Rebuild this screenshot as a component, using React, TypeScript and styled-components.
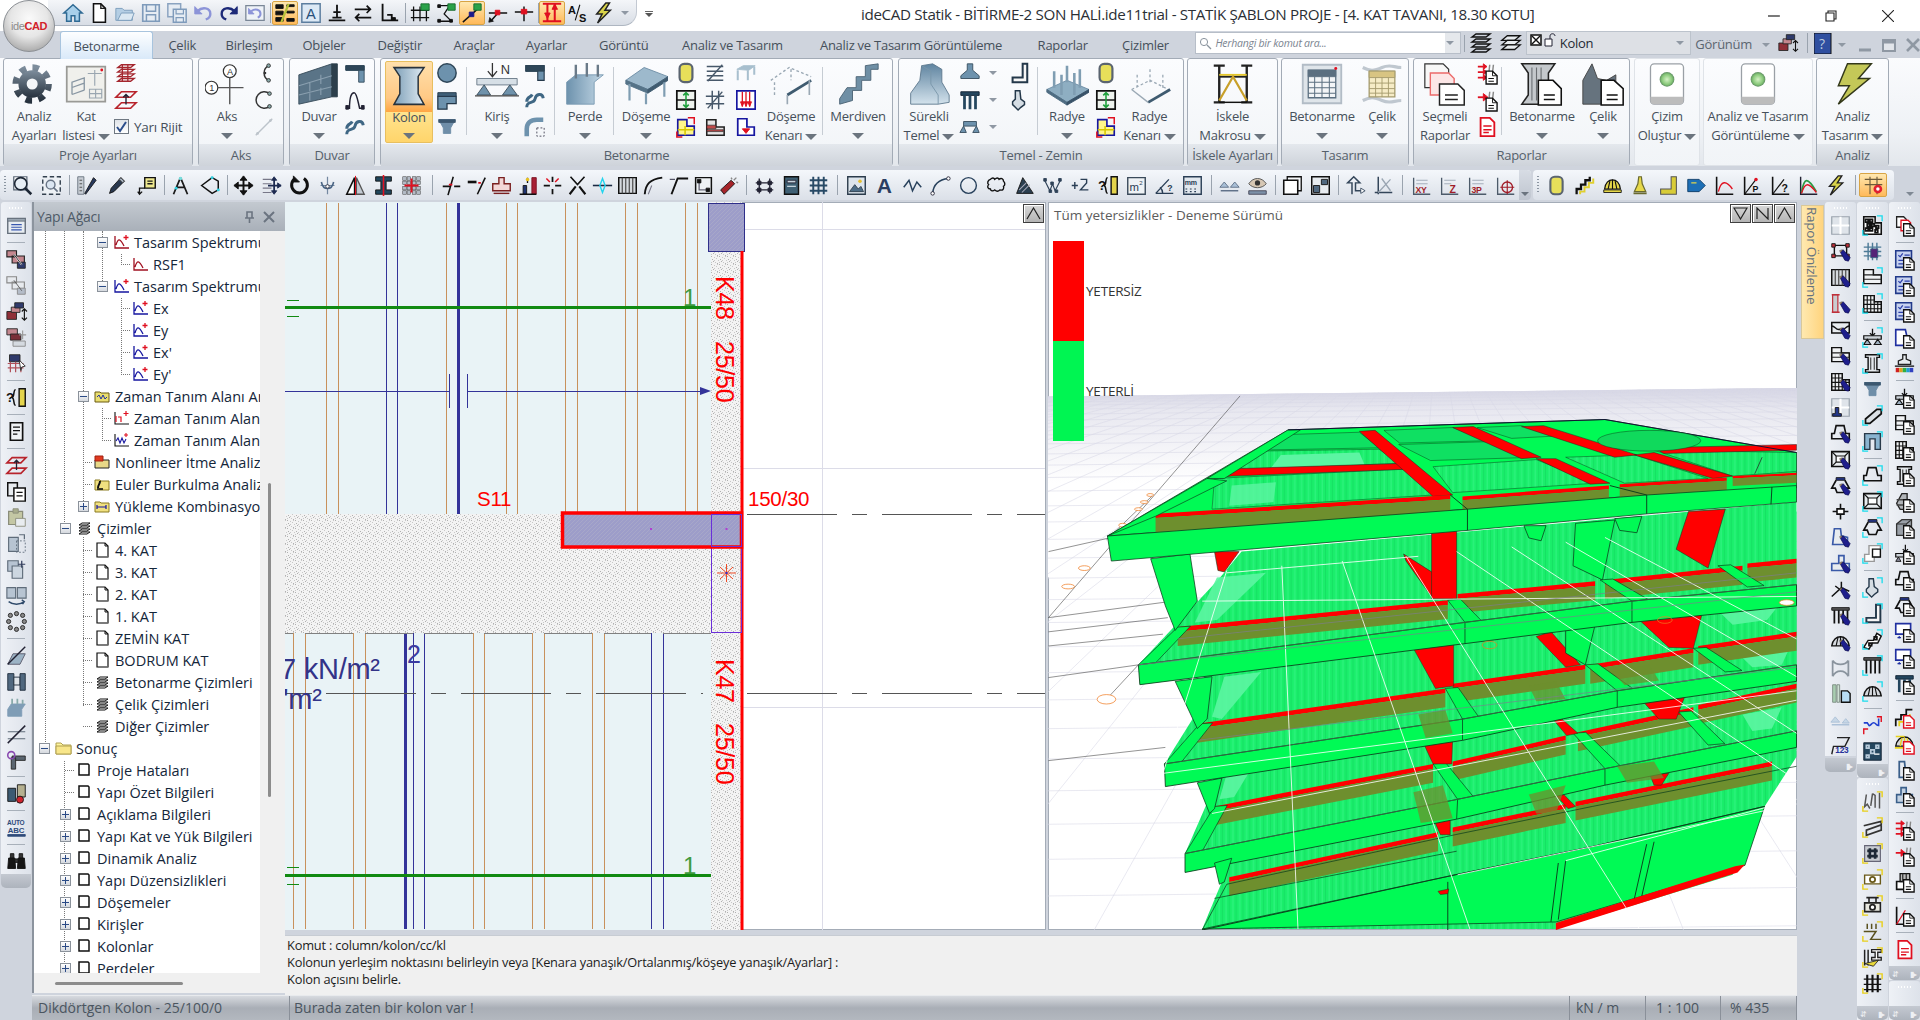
import React from 'react'
import styled, { createGlobalStyle } from 'styled-components'

const FONT = `"Open Sans", "Noto Sans", "Liberation Sans", sans-serif`

const GlobalStyle = createGlobalStyle`
html, body { margin: 0; padding: 0; background: #cfd4dd; overflow: hidden; }
* { box-sizing: border-box; }
`

/* ---------- icon drawings ---------- */
const L = (d: string, c = '#1a1a1a', w = 1.5) => <path d={d} stroke={c} strokeWidth={w} fill="none" />
const F = (d: string, c: string, s = '#222', w = 1) => <path d={d} fill={c} stroke={s} strokeWidth={w} />
const T = (x: number, y: number, t: string, c = '#222', sz = 9, b = true) => (
  <text x={x} y={y} fill={c} fontSize={sz} fontWeight={b ? 700 : 400} fontFamily="Liberation Sans, sans-serif">{t}</text>
)
const R = '#e01020'

const S: Record<string, React.ReactNode> = {
  home: <>{F('M2 12 12 3l10 9h-3v9h-5v-6h-4v6H5v-9z', '#a9d0ea', '#2f6a94', 1.6)}</>,
  new: <>{F('M6 2h8l5 5v15H6z', '#fff', '#111', 1.7)}{L('M14 2v5h5')}</>,
  open: <>{F('M2 7h7l2 2h9v11H2z', '#b4cee4', '#7b9cbb')}{F('M4 20l4-8h14l-3 8z', '#dbe8f2', '#7b9cbb')}</>,
  save: <>{F('M3 3h18v18H3z', '#e6ecf3', '#7f9bbb', 1.8)}{L('M7 3v7h10V3M7 21v-7h10v7', '#7f9bbb', 1.6)}</>,
  saveall: <>{F('M2 2h14v14H2z', '#e6ecf3', '#8aa3c0', 1.6)}{F('M8 8h14v14H8z', '#e6ecf3', '#7f9bbb', 1.6)}{L('M11 8v5h8V8M11 22v-5h8v5', '#7f9bbb', 1.3)}</>,
  undo: <>{L('M6 10c5-5 14-4 14 3 0 3-2 5-5 6', '#8c94d8', 2.6)}{F('M3 5v8h8z', '#8c94d8', '#8c94d8')}</>,
  redo: <>{L('M18 10c-5-5-14-4-14 3 0 3 2 5 5 6', '#1d2a78', 2.6)}{F('M21 5v8h-8z', '#1d2a78', '#1d2a78')}</>,
  undoBox: <>{F('M2 4h20v16H2z', '#eef2f7', '#7a8797', 1.4)}{L('M8 10c4-3 10-2 10 3 0 2-1 3-3 4', '#8c94d8', 2.2)}{F('M5 7v6h6z', '#8c94d8', '#8c94d8')}</>,
  layerBars: <>{F('M2 3h8v4H2zM2 10h8v4H2zM2 17h8v4H2z', '#111', '#111')}{F('M14 3h8v2h-8zM14 10h8v2h-8zM14 18h8v3h-8z', '#111', '#111')}{L('M8 22 16 2', '#b6c23a', 2.4)}</>,
  textBox: <>{F('M2 2h20v20H2z', '#dce9f5', '#5c7e9f', 1.6)}{T(6.5, 18, 'A', '#27507a', 16, false)}</>,
  baseT: <>{L('M12 3v14M8 11h8M3 20h18M7 17h10', '#111', 2)}</>,
  arrowsH: <>{L('M3 8h16M5 17h16M16 4l4 4-4 4M8 13l-4 4 4 4', '#111', 1.9)}</>,
  ell: <>{L('M5 2v18h17M10 14h5v6', '#111', 2)}{F('M15 17h4v3h-4z', '#111', '#111')}</>,
  lockGrid: <>{L('M5 5v16M12 5v16M19 5v16M2 9h20M2 17h20', '#111', 1.4)}{F('M13 2h9v7h-9z', '#2aa24a', '#176b2e')}</>,
  lockZig: <>{L('M4 4h12l-6 9 8 8H4', '#111', 1.4)}{F('M14 2h8v7h-8z', '#2aa24a', '#176b2e')}{F('M3 3h3v3H3zM3 19h3v3H3zM16 19h3v3h-3z', '#111', '#111')}</>,
  lockSnap: <>{L('M2 22 20 6', '#111', 1.6)}{F('M9 11h5v5H9z', '#1a1a8a', '#1a1a8a')}{F('M14 2h8v7h-8z', '#2aa24a', '#176b2e')}</>,
  snapA: <>{L('M2 12h20M4 21 11 13', '#111', 1.6)}{F('M9 9h5v5H9z', R, R)}{F('M3 17l4 4-5 1z', '#111')}</>,
  snapB: <>{L('M2 11h20M12 5v16', '#111', 1.6)}{F('M9 8h6v5H9z', R, R)}</>,
  redArrows: <>{L('M7 3v18M15 3v18M2 21h20M2 2h20', R, 2.2)}{F('M4 12h6l-3 6zM12 8h6l-3-6z', R, R)}</>,
  aslash: <>{T(1, 13, 'A', '#111', 12)}{L('M9 20 14 3', '#111', 1.2)}{T(13, 22, 'S', '#111', 12)}</>,
  bolt: <>{F('M14 1 4 13h6l-5 10 14-14h-6l5-8z', '#d9d34a', '#222', 1.6)}</>,
  zoomA: <>{F('M2 2h15v15H2z', '#fff', '#5a6675', 1.4)}<circle cx="10" cy="10" r="7" fill="#e7eef5" stroke="#1d2735" strokeWidth="1.8" />{L('M15 15l7 7', '#1d2735', 3)}</>,
  zoomW: <><rect x="2" y="2" width="20" height="20" fill="#edf1f5" stroke="#33404e" strokeWidth="1.6" strokeDasharray="5 3" /><circle cx="11" cy="11" r="5" fill="#dbe6f1" stroke="#687485" strokeWidth="1.6" />{L('M14 14l5 5', '#687485', 2)}</>,
  rulerPen: <>{F('M2 2h7v20H2z', '#c7cdd4', '#66707c')}{L('M4 6h3M4 10h3M4 14h3M4 18h3', '#444', 1)}{F('M10 21 20 3l3 3-12 16z', '#28395e', '#111')}</>,
  pencil: <>{F('M4 21l2-6L17 3l4 4L9 19z', '#29384e', '#111')}{F('M15 5l4 4 2-2-4-4z', '#a8b3c0', '#333')}</>,
  tag: <>{F('M10 3h12v12H10z', '#efe98f', '#111', 1.6)}{L('M13 7h6M13 10h6')}{L('M10 15 4 15v6M2 19l2 3 3-3', '#111', 1.5)}</>,
  compass: <>{L('M12 3 4 22M12 3l8 19M7 14h10', '#1a1a1a', 2)}<circle cx="12" cy="4" r="2" fill="#7dd" /><circle cx="7" cy="15" r="1.7" fill="#2fd0e0" /></>,
  diamond: <>{L('M3 12 15 3l7 4v10l-7 4z', '#111', 1.7)}<circle cx="15" cy="3" r="1.7" fill="#2fd0e0" /><circle cx="22" cy="17" r="1.7" fill="#2fd0e0" /></>,
  move: <>{L('M12 2v20M2 12h20', '#111', 2.2)}{F('M12 1l4 5H8zM12 23l4-5H8zM1 12l5-4v8zM23 12l-5-4v8z', '#111', '#111')}</>,
  moveGrid: <>{L('M2 5h10M2 10h10M2 15h10M2 20h10', '#778', 1.2)}{L('M15 4v16M8 12h15', '#1d2a50', 2)}{F('M15 2l3 4h-6zM15 22l3-4h-6zM23 12l-4-3v6z', '#1d2a50', '#1d2a50')}</>,
  rotate: <>{L('M17 4A9 9 0 1 1 7 4', '#111', 3.4)}{F('M5 1v7h7z', '#111', '#111')}</>,
  mirrorAxis: <>{L('M12 2v20M4 12h16', '#7488a0', 1.4)}{L('M5 8c2 10 12 10 14 0', '#4a6484', 1.8)}<circle cx="12" cy="13" r="2" fill="#fff" stroke="#334" /></>,
  mirror: <>{F('M11 3v19H2z', '#fff', '#111', 1.8)}{F('M13 3v19h9z', '#c4cbd3', '#555', 1.5)}{L('M12 1v22', R, 1.2)}</>,
  ibeamRed: <>{F('M3 2h18v5h-6v10h6v5H3v-5h6V7H3z', '#21475c', '#111')}{L('M12 0v24', R, 1.8)}</>,
  scatter: <>{[4, 9, 15, 20].flatMap((x) => [4, 9, 15, 20].map((y) => <rect key={x * 31 + y} x={x - 2} y={y - 2} width="4" height="4" fill="#b4bcc6" stroke="#444" strokeWidth=".6" />))}{L('M12 4v16M4 12h16', R, 2.2)}</>,
  trim: <>{L('M2 13h9M15 13h7', '#111', 2)}{L('M14 2 8 23', '#111', 1.8)}{L('M9 11h4', R, 2)}</>,
  brk: <>{L('M2 8h10', '#111', 3)}{L('M14 9h3', R, 2)}{L('M22 3 13 22', '#111', 1.8)}</>,
  stamp: <>{F('M9 3h6v7h7v8H2v-8h7z', '#f3d7d7', '#7a2020', 1.6)}{L('M3 21h18', '#7a2020', 1.6)}</>,
  flagBars: <>{F('M17 3h5v19h-5z', '#a82035', '#7a1020')}{F('M7 12h4v10H7z', '#1f3470', '#111')}{L('M3 22h19M12 3v6', '#111', 1.5)}<circle cx="12" cy="5" r="2" fill="#e6c020" /></>,
  starCross: <>{L('M12 2v6M12 16v6M2 12h7M15 12h7', '#111', 2)}{L('M5 4l4 4M19 4l-4 4', R, 1.7)}</>,
  xcross: <>{L('M3 22 10 13M21 22l-7-9', '#111', 2.4)}{L('M4 2l8 9 8-9', '#111', 1.8)}</>,
  crossCy: <>{L('M1 12h22', '#1a2a44', 1.8)}{L('M12 4l3 8-3 8-3-8z', '#22d4ee', 1.6)}</>,
  corner: <>{L('M2 22C3 10 8 5 22 3', '#111', 2.2)}{L('M6 22 10 12', '#778', 1.2)}</>,
  corner2: <>{L('M4 22 11 4h12', '#111', 2.2)}{L('M2 5h6', '#556', 1.4)}</>,
  boxNodes: <>{F('M3 3h18v18H3z', '#eef2f5', '#111', 1.7)}{L('M7 7v10h10', '#667', 1.5)}{F('M5 5h4v4H5zM15 15h4v4h-4z', '#111', '#111')}</>,
  dynamite: <>{F('M3 17 15 6l4 4L7 22z', '#a6242a', '#111')}{L('M18 6l3-3M15 3l1 2M21 8l2 1', '#888', 1.6)}</>,
  nodesGrid: <>{L('M6 4v17M18 4v17M2 9h20M2 17h20', '#223', 1.5)}{F('M4 7h4v4H4zM16 7h4v4h-4zM4 15h4v4H4zM16 15h4v4h-4z', '#223', '#223')}</>,
  doorBox: <>{F('M4 2h16v20H4z', '#3f6074', '#111', 1.6)}{F('M7 6h10v3H7z', '#c7d3dc', '#223')}{L('M7 13h10', '#c7d3dc')}</>,
  mesh: <>{L('M6 2v20M12 2v20M18 2v20M2 6h20M2 12h20M2 18h20', '#284a66', 2.2)}</>,
  picture: <>{F('M2 2h20v20H2z', '#dde5ec', '#2b3b4b', 1.6)}{F('M4 19l6-8 4 5 3-3 3 6z', '#4d6d86', '#2b3b4b')}<circle cx="16" cy="7" r="2" fill="#e6c030" /></>,
  textA: <>{T(3, 21, 'A', '#2b3f63', 24, true)}</>,
  zig: <>{L('M2 14 8 6l4 12 5-10 5 6', '#28415c', 1.7)}</>,
  curve: <>{L('M3 21C4 10 11 5 21 4', '#28415c', 1.7)}<circle cx="3" cy="21" r="2" fill="#fff" stroke="#223" /><circle cx="21" cy="4" r="2" fill="#fff" stroke="#223" /></>,
  circle: <><circle cx="12" cy="12" r="9" fill="none" stroke="#28415c" strokeWidth="1.6" /></>,
  cloud: <>{L('M5 5c2-2 4-2 5 0 2-2 4-2 5 0 2-2 5-1 5 2 2 2 2 5 0 6 1 3-1 5-4 4-2 2-4 2-6 0-2 2-5 1-5-1-3 0-4-3-2-5-2-2-1-5 2-6z', '#111', 1.6)}</>,
  hatchTri: <>{F('M3 21 10 3l12 18z', '#2b3f50', '#111')}{L('M6 17l8-8M9 20l9-9', '#aab', 1.2)}</>,
  nodesZig: <>{L('M3 6l6 12 3-8 3 8 6-12', '#2f4258', 1.3)}{F('M2 4h3v3H2zM10 8h3v3h-3zM8 17h3v3H8zM15 17h3v3h-3zM19 4h3v3h-3z', '#2f4258', '#2f4258')}</>,
  plus2: <>{L('M2 12h7M5.5 8v8M12 5h7v4l-7 8h9', '#2a3e55', 1.6)}</>,
  qbrace: <>{T(0, 17, '?', '#111', 15)}{L('M11 3c-3 0-1 8-4 9 3 1 1 9 4 9', '#111', 1.7)}{F('M15 2h7v20h-7z', '#e4d44c', '#111', 1.6)}</>,
  m2: <>{F('M2 3h20v19H2z', '#eef2f5', '#3a4a5a', 1.6)}{T(4, 18, 'm', '#2d3f55', 13, false)}{T(15, 11, '2', '#2d3f55', 7, false)}</>,
  angleQ: <>{L('M2 21h20M2 21 17 5M10 21c0-3-1-5-3-7', '#2a3e55', 1.6)}{T(15, 18, '?', '#2a3e55', 10)}</>,
  mm2: <>{F('M2 2h20v20H2z', '#e2e8ee', '#2a3e55', 1.6)}{T(3, 11, 'mm', '#2a3e55', 8)}{L('M4 16h2M9 16h2M14 16h2M4 19h2M9 19h2M14 19h2', '#2a3e55', 1.4)}</>,
  levels: <>{L('M2 18h20', '#5b6d84', 1.6)}{F('M6 8l5 6H1zM18 8l5 6H13z', '#a9bfd6', '#5b6d84')}</>,
  eye: <>{F('M2 18h20v4H2z', '#7d91a8', '#445')}{F('M2 10c5-8 15-8 20 0-5 6-15 6-20 0z', '#d6c7b4', '#4a4a4a')}<circle cx="12" cy="9" r="3" fill="#333" /></>,
  sheet: <>{F('M6 2h16v16H6z', '#f7f9fb', '#111', 1.5)}{F('M2 6h16v16H2z', '#fff', '#111', 1.8)}</>,
  sheet2: <>{F('M2 2h20v20H2z', '#e8ecf0', '#111', 1.7)}{F('M4 12h7v8H4zM13 5h7v6h-7z', '#50687f', '#111')}</>,
  upArrow: <>{L('M8 22V9H3l7-7 7 7h-5v9h9', '#34465a', 1.7)}{F('M18 15l5 3-5 3z', '#fff', '#34465a')}</>,
  crossAxes: <>{L('M2 20h20M6 2v20', '#34465a', 1.7)}{L('M6 20 20 5M10 4l10 14', '#9aa5b2', 1.5)}</>,
  xy: <>{L('M3 3v19h19', '#4d5b6a', 1.5)}{L('M6 6h13M6 10h13', '#9aa5b2', 1)}{T(5, 20, 'XY', '#a01c28', 10)}</>,
  zz: <>{L('M3 3v19h19', '#4d5b6a', 1.5)}{L('M6 6h13M6 10h8', '#9aa5b2', 1)}{T(12, 20, 'Z', '#a01c28', 12)}</>,
  p3: <>{L('M3 3v19h19', '#4d5b6a', 1.5)}{L('M6 6h13M6 10h13', '#9aa5b2', 1)}{T(5, 20, '3P', '#a01c28', 10)}</>,
  target: <>{L('M3 3v19h19', '#4d5b6a', 1.5)}<circle cx="14" cy="14" r="6" fill="none" stroke="#a01c28" strokeWidth="1.5" />{L('M14 6v16M6 14h16', '#a01c28', 1.3)}</>,
  capsule: <><rect x="5" y="2" width="14" height="20" rx="5" fill="#e7df5a" stroke="#5a6470" strokeWidth="2.4" /></>,
  stairsY: <>{L('M3 22V16h5v-5h5V6h5V2', '#111', 2.6)}{L('M7 22V19h5v-5h5V9h5V4', '#e0d030', 2.2)}</>,
  dome: <>{F('M3 16c1-14 17-14 18 0z', '#e6d84a', '#111', 1.4)}{L('M7 16 9 7M12 16V5M17 16 15 7', '#111', 1.3)}{F('M2 17h20v3H2z', '#e6d84a', '#111')}</>,
  nut: <>{F('M10 2h3l1 8 4 9H5l4-9z', '#e6d84a', '#6a6a30', 1.4)}{L('M4 21h15', '#6a6a30', 2)}</>,
  lY: <>{F('M15 2h6v20H3v-6h12z', '#d8cc38', '#555', 1.2)}</>,
  tagB: <>{F('M2 5h13l7 7-7 7H2z', '#1d6fb6', '#0c3a66')}{L('M6 9h6', '#e6d84a', 1.4)}</>,
  graph: <>{L('M3 2v20h19', '#111', 1.8)}{L('M5 19C8 6 14 6 21 16', R, 1.5)}</>,
  graphP: <>{L('M3 2v20h19', '#111', 1.8)}{L('M3 22 16 5', '#111', 1.4)}{T(12, 19, 'P', '#111', 10)}<circle cx="16" cy="5" r="2" fill={R} /></>,
  graphQ: <>{L('M3 2v20h19', '#111', 1.8)}{L('M3 22 16 5', '#111', 1.4)}{T(13, 19, '?', '#111', 12)}</>,
  spectrum: <>{L('M3 2v20h19', '#223', 1.6)}{L('M4 20C7 2 11 2 21 19', '#2a9a44', 2)}{L('M4 21C8 8 12 8 21 20', R, 1.5)}</>,
  frameRed: <>{L('M2 5h20M2 11h20M8 2v20M16 2v20', '#6a5a3a', 1.3)}<circle cx="17" cy="16" r="5" fill="#e02030" /><circle cx="17" cy="16" r="2" fill="#fff" /></>,
  /* side bars */
  listDoc: <>{F('M2 4h20v17H2z', '#e8edf2', '#66707c', 1.6)}{F('M2 4h20v3H2z', '#9aa6b2', '#66707c')}{L('M6 11h12M6 14h12M6 17h12', '#3858b0', 1.3)}</>,
  sel1: <>{F('M1 2h11v7H1zM7 8h14v8H7z', '#c4878f', '#222', 1.3)}{F('M13 15h9v7h-9z', '#2f3a6b', '#222')}{L('M9 6l9 12', '#fff', 2)}{L('M9 6l9 12', '#111', 1)}</>,
  sel2: <>{F('M1 2h11v7H1zM7 8h14v8H7z', '#e7eaee', '#888', 1.3)}{F('M13 15h9v7h-9z', '#b4bcc8', '#888')}{L('M9 6l9 12', '#555', 1)}</>,
  sel3: <>{F('M1 12h11v9H1z', '#8f2f38', '#222')}{F('M6 7h10v6H6z', '#c4878f', '#222')}{F('M10 2h10v6H10z', '#2f3a6b', '#222')}{L('M21 9v13M18 19l3 3 3-3M18 12l3-3 3 3', '#111', 1.3)}</>,
  sel4: <>{F('M1 2h12v7H1z', '#c4878f', '#222')}{F('M5 8h12v7H5z', '#7a2f38', '#222')}{F('M8 16h14v6H8z', '#d5dae0', '#888')}{L('M19 4v10M15 9h8', '#999', 1.3)}</>,
  sel5: <>{F('M4 2h12v8H4z', '#2f3a6b', '#222')}{L('M2 12h18M2 17h18M5 10v12M11 10v12M17 10v12', '#b0505a', 1.4)}{F('M15 8l7 7-4 1-1 4z', '#fff', '#222')}</>,
  noteDoc: <>{F('M5 2h14v20H5z', '#f0f2f4', '#111', 1.9)}{L('M8 7h8M8 11h8M8 15h5', '#111', 1.5)}</>,
  floorsRed: <>{L('M7 3h16l-6 6H1zM7 15h16l-6 6H1z', '#b8242c', 1.8)}{L('M12 6v11M9 9l3-3 3 3', '#223', 1.5)}</>,
  copyDoc: <>{F('M2 2h11v15H2z', '#e8ecf0', '#111', 1.7)}{F('M9 8h13v15H9z', '#fff', '#111', 1.7)}{L('M12 13h7M12 17h7', '#111', 1.2)}</>,
  paste: <>{F('M3 5h16v15H3z', '#c4c7a4', '#8a8d7a', 1.4)}{F('M8 2h6v5H8z', '#a8ac8c', '#8a8d7a')}{F('M11 13h11v9H11z', '#e8ecef', '#8a8d7a')}</>,
  dupA: <>{F('M3 5h11v16H3z', '#b7c4d2', '#5f6c7a', 1.3)}<rect x="12" y="9" width="10" height="13" fill="none" stroke="#5f6c7a" strokeDasharray="2 2" />{L('M15 2h6v5', '#5f6c7a', 1.4)}</>,
  dupB: <>{F('M2 2h12v12H2z', '#b7c4d2', '#5f6c7a', 1.3)}{F('M7 8h12v14H7z', '#ccd6e0', '#5f6c7a', 1.3)}{L('M18 2v8M14 6h8', '#2f3a5a', 1.4)}</>,
  dupC: <>{F('M1 3h10v12H1zM13 3h10v12H13z', '#b7c4d2', '#5f6c7a', 1.3)}{L('M3 19c5 4 13 4 18 0M18 17l3 2-2 3', '#2f4a6a', 1.5)}</>,
  dots8: <>{[[5, 5], [12, 3], [19, 5], [21, 12], [19, 19], [12, 21], [5, 19], [3, 12]].map(([x, y]) => <circle key={x * 50 + y} cx={x} cy={y} r="2.4" fill="#888" stroke="#222" />)}</>,
  slabCut: <>{F('M2 22 8 10h14l-6 12z', '#9cb3c5', '#556')}{L('M2 22 22 2', '#223', 1.6)}</>,
  wallEnd: <>{F('M2 3h7v19H2z', '#50687f', '#1c2a3a')}{F('M9 7h7v9H9z', '#dfe4e9', '#1c2a3a')}{F('M16 3h6v19h-6z', '#50687f', '#1c2a3a')}</>,
  perdeS: <>{F('M2 14 6 8h16l-4 6v8H2z', '#7f9db6', '#7f9db6')}{L('M7 8V2M13 8V2M19 8V3', '#8aa', 2)}</>,
  cutLine: <>{L('M2 10h20M2 18h20', '#5f6c7a', 1.4)}{L('M2 23 22 3', '#223', 1.7)}</>,
  tPurple: <>{F('M7 8h15v5H7z', '#5a6570', '#222')}{F('M6 10h5v13H6z', '#5a6570', '#222')}<circle cx="6" cy="7" r="4" fill="none" stroke="#8a4ab0" strokeWidth="1.8" /></>,
  mix: <>{F('M2 6h9v15H2z', '#3c5a72', '#111')}{F('M13 2h9v14h-9z', '#b5b090', '#111')}<circle cx="16" cy="19" r="4" fill="#d0232e" stroke="#111" /></>,
  autoabc: <>{T(1, 9, 'AUTO', '#2f4a7a', 7.5)}{T(2, 18, 'ABC', '#2f4a7a', 9)}{F('M2 20h20v2H2z', '#2f4a7a', '#2f4a7a')}</>,
  binoc: <>{F('M3 8h7l1 12H2zM14 8h7l1 12h-9z', '#151515', '#111')}{F('M5 3h4v5H5zM15 3h4v5h-4zM10 9h4v4h-4z', '#333', '#111')}</>,
  /* right dock bases */
  gridG: <>{F('M2 2h20v20H2z', '#dfe4ea', '#9aa3ad', 1.4)}{L('M12 2v20M2 12h20', '#fff', 2.4)}</>,
  nodesR: <>{L('M4 5h16M4 17h16M5 5v12M19 5v12', '#111', 1.6)}{F('M2 3h4v4H2zM18 3h4v4h-4zM2 15h4v4H2zM18 15h4v4h-4z', '#c0303a', '#111')}</>,
  wallS: <>{F('M2 3h20v18H2z', '#d5d9de', '#111', 1.7)}{L('M6 3v18M10 3v18M14 3v18M18 3v18', '#444', 1.3)}</>,
  ibeamV: <>{F('M3 2h6v20H3z', '#c9ccd0', '#c0303a', 1.4)}{L('M2 2h9M2 22h9', '#c0303a', 1.8)}</>,
  beamB: <>{F('M2 4h20v12H2z', '#e8ecef', '#111', 1.7)}{L('M2 8c4 0 4 4 8 4h4c4 0 4-4 8-4', '#111', 1.5)}</>,
  stepS: <>{F('M2 3h11v6h9v10H2z', '#f0f2f4', '#111', 1.7)}{L('M2 9h20M2 14h20', '#222', 1.4)}</>,
  gridL: <>{F('M2 3h12v7h8v12H2z', '#f0f2f4', '#111', 1.7)}{L('M6 3v19M10 3v19M14 10v12M18 10v12M2 8h12M2 13h20M2 18h20', '#111', 1.3)}</>,
  gridPillar: <>{F('M2 2h20v20H2z', '#dfe4ea', '#9aa3ad', 1.4)}{L('M12 2v20M2 12h20', '#fff', 2.4)}{F('M6 12h4v7h3v3H3v-3h3z', '#22378a', '#111')}</>,
  trap: <>{L('M7 3h9l2 9h4v6H2v-6h3z', '#111', 1.9)}</>,
  boxTrap: <>{F('M2 3h20v17H2z', '#e8ecef', '#111', 1.8)}{F('M7 8h10v7H7z', '#fff', '#111', 1.3)}{L('M2 3l5 5M22 3l-5 5M2 20l5-5M22 20l-5-5', '#111', 1.3)}</>,
  capB: <>{F('M7 3h10v3H7z', '#26378a', '#111')}{L('M7 6 2 15h4l2 5h8l2-5h4l-5-9', '#111', 1.9)}</>,
  crossS: <>{L('M12 3v18M3 12h18', '#111', 1.8)}{F('M8 9h8v6H8z', '#fff', '#111', 1.8)}</>,
  lBlue: <>{F('M5 2h7l1 8 7 2v8H3z', '#e8ecef', '#3a5aa8', 1.9)}</>,
  tBlue: <>{F('M10 3h6v9h6v8H2v-8h8z', '#e8ecef', '#3a5aa8', 1.9)}</>,
  yS: <>{L('M2 20 13 10l9 4M13 10V3M6 8l16 12', '#111', 1.7)}</>,
  comb: <>{F('M2 3h20v3H2z', '#555', '#111')}{L('M5 6v15M10 6v15M15 6v15M20 6v15', '#111', 2)}</>,
  arcS: <>{F('M2 17c2-14 18-14 20 0z', '#d5d9de', '#111', 1.6)}{L('M7 17l2-9M12 17V6M17 17l-2-9', '#111', 1.3)}</>,
  archG: <>{L('M3 4c4 6 14 6 18 0M3 4v18M21 4v18M3 22c4-8 14-8 18 0', '#8a949e', 2)}</>,
  stripes: <>{F('M3 2h4v20H3z', '#a8cdb0', '#7a8a80')}{F('M8 2h3v20H8z', '#cfe0d4', '#7a8a80')}{F('M13 9h7l3 3v10H13z', '#b8dcf4', '#111', 1.6)}</>,
  flatG: <>{L('M2 18h20', '#a9bfd6', 1.6)}{F('M6 9l5 6H1zM18 11l4 5h-8z', '#c7d7e6', '#a9bfd6')}</>,
  s123: <>{L('M8 3h14l-5 10H4l-2 9', '#222', 1.6)}{T(6, 21, '123', '#25319a', 9.5)}</>,
  brick: <>{F('M2 2h13v7h7v13H2z', '#fff', '#111', 1.8)}{L('M4 5h3v3H4zM9 5h3v3H9zM6 10h3v3H6zM11 10h3v3h-3zM16 12h3v3h-3zM4 15h3v3H4zM9 15h3v3H9zM15 17h3v3h-3z', '#111', 2)}</>,
  gridBlue: <>{L('M7 2v20M12 2v20M17 2v20M2 7h20M2 12h20M2 17h20', '#4c7a96', 1.6)}{F('M10 9h8v10h-8z', '#527', '#3a6080')}</>,
  loadBeam: <>{L('M12 2v8M9 7l3 3 3-3', '#111', 1.5)}{F('M2 10h20v4H2z', '#cdd3d9', '#111', 1.4)}{F('M6 14l4 6H2zM18 14l4 6h-8z', '#9eb0c0', '#111', 1.3)}</>,
  colS: <>{F('M4 2h16v3h-3v14h3v3H4v-3h3V5H4z', '#e4e8ec', '#111', 1.6)}{L('M10 5v14M14 5v14', '#333', 1.2)}</>,
  funnel: <>{F('M3 4h18l-5 9v6H8v-6z', '#6f8ea8', '#6f8ea8')}{F('M3 4h18v3H3z', '#3c5870', '#3c5870')}</>,
  slant: <>{F('M4 16 17 5h5v5L9 21H4z', '#dbe0e5', '#111', 2)}</>,
  uG: <>{F('M3 3h18v18h-6V9H9v12H3z', '#8ab4d0', '#2a3a4a', 1.6)}</>,
  lWhite: <>{F('M8 3h13v13h-7v5H3v-8h5z', '#fff', '#999', 1.6)}{F('M12 7h9v9h-9z', '#fff', '#111', 1.6)}</>,
  arrowBeam: <>{L('M13 2v8M10 7l3 3 3-3', '#111', 1.4)}{F('M2 12h20v4H2z', '#cdd3d9', '#111', 1.4)}{F('M5 16l3 5H2zM18 16l3 5h-6z', '#889', '#111')}</>,
  stairBrick: <>{F('M2 21 7 13h6l4-8 5 3-4 8h-6l-4 7z', '#fff', '#111', 1.7)}{L('M8 16h3v3H8zM14 9h3v3h-3z', '#111', 2)}</>,
  profile: <>{L('M2 9h4l2 3c2 1 3-4 6-3 3 1 2 3 5 3V4', '#2040d0', 1.8)}{L('M2 22v-6h5M17 2h5v6', '#e01020', 1.6)}</>,
  tile: <>{F('M2 2h20v20H2z', '#24465e', '#123')}{L('M5 5h3v3H5zM16 5h3v3h-3zM5 16h3v3H5zM10 10h4v4h-4z', '#b8cbdb', 2)}{L('M14 15h6', '#fff', 1.5)}</>,
  cols3: <>{L('M5 4 3 18l3-3 3 5M12 3l-2 14M12 3l3 2v14M20 2v18', '#555', 1.7)}</>,
  channel: <>{L('M2 10l20-5v4L5 15v6l17-6V9', '#333', 1.9)}</>,
  gridBig: <>{F('M3 3h18v18H3z', '#c9cdd2', '#667', 1.3)}{L('M9 6v12M15 6v12M6 9h12M6 15h12', '#1f2a36', 3)}</>,
  boxDot: <>{F('M3 7h18v10H3z', '#fff', '#6a5a1a', 1.6)}<circle cx="12" cy="12" r="3" fill="#fff" stroke="#6a5a1a" strokeWidth="2" /></>,
  boxT: <>{F('M3 9h18v10H3z', '#e8e8e0', '#222', 1.8)}<circle cx="12" cy="14" r="3" fill="#fff" stroke="#222" strokeWidth="2" />{L('M8 3v6M16 3v6M5 3h14', '#222', 1.8)}</>,
  arrowsZ: <>{L('M6 3v6M11 3v6M16 3v6M2 12h14l-6 9h12', '#5a5220', 1.7)}</>,
  iPlate: <>{L('M3 3v18M7 3v18', '#222', 1.7)}{F('M11 3h11v3h-4v6h4v3H11v-3h4V6h-4z', '#fff', '#222', 1.5)}{F('M3 19l16-4-6 7z', '#e8d83a', '#222')}</>,
  railTrack: <>{L('M6 2v20M12 2v20M18 2v20', '#111', 2.4)}{L('M2 7h20M2 13h20M2 19h20', '#111', 1.4)}</>,
  docR: <>{F('M3 2h8l3 3v9H3z', '#fff', '#222', 1.5)}{F('M8 6h8l3 3v9H8z', '#fff', R, 1.5)}</>,
  checks: <>{F('M2 2h18v19H2z', '#c7d2ef', '#223a8a', 1.8)}{L('M5 7l2 2 3-4M12 7h6M5 13h7M5 17h6', '#2a3faa', 1.4)}</>,
  lDoc: <>{F('M2 3h11l2 9h4v9H2z', '#fff', '#2030a0', 1.9)}</>,
  rainbow: <>{F('M10 2h4v5l5 2v4H5V9l5-2z', '#e8ecef', '#222', 1.5)}{L('M1 15h22', '#111', 1.5)}<rect x="2" y="17" width="4" height="5" fill="#d02020" /><rect x="6" y="17" width="4" height="5" fill="#e0a020" /><rect x="10" y="17" width="4" height="5" fill="#30b040" /><rect x="14" y="17" width="4" height="5" fill="#20a0d0" /><rect x="18" y="17" width="4" height="5" fill="#3040c0" /></>,
  boxS: <>{F('M3 14 9 3h6v18H7z', '#b0b4b8', '#222', 1.5)}{L('M3 10h12M3 16h12', '#444')}</>,
  cubeS: <>{F('M3 8 9 3h11v13l-6 5H3z', '#9aa0a8', '#333', 1.5)}{L('M3 8h11v13M14 8l6-5', '#333', 1.3)}</>,
  rectB: <>{F('M2 3h17v12H2z', '#fff', '#2030a0', 1.9)}{L('M6 17v3M4 19h4', '#2030a0', 1.3)}</>,
  combB: <>{F('M2 3h20v4H2z', '#24465e', '#123')}{L('M6 7v15M12 7v15M18 7v15', '#24465e', 3)}</>,
  stairY: <>{L('M2 22v-8h6V9h6V3h7', '#111', 2)}{L('M6 22v-5h6v-4h6V8', '#e8d21c', 2)}</>,
  domeY: <>{F('M2 15c2-14 18-14 20 0z', '#d7d7d7', '#111', 1.6)}{L('M2 4h10M7 15l2-9M12 15V5M17 15l-2-9', '#e8d21c', 1.5)}{L('M1 17h22', '#e8d21c', 2)}</>,
  lBlue2: <>{L('M6 21V3h6l1 10h7v8z', '#3a5f8a', 2)}</>,
  tBlue2: <>{F('M8 3h6v8h7v9H3v-9h5z', '#c4d3e3', '#3a5f8a', 1.8)}</>,
  redAr: <>{L('M2 5h6M2 11h6M2 17h6', R, 2)}{F('M8 2l4 3-4 3zM8 8l4 3-4 3zM8 14l4 3-4 3z', R, R)}{L('M15 3l-1 9M19 3l-1 9', '#888', 1.6)}</>,
  redAr2: <>{L('M2 9h6', R, 2)}{F('M8 5l5 4-5 4z', R, R)}{L('M15 3l-1 9M19 3l-1 9', '#888', 1.6)}</>,
  colBox: <>{F('M3 12h17v9H3z', '#fff', '#111', 1.9)}{F('M7 3h11v9H7z', '#bbb', '#111', 1.5)}{L('M10 3v9M14 3v9', '#333')}</>,
  graphD: <>{L('M3 2v20h19', '#111', 1.9)}{L('M3 22 13 6', R, 1.6)}</>,
  redDoc: <>{F('M5 2h10l5 5v15H5z', '#fff', R, 2)}{L('M8 11h9M8 15h9M8 18h6', R, 1.7)}</>,
  blank: <></>,
  /* ribbon small */
  gridStack: <>{L('M3 6l4-3h14l-4 3zM3 11l4-3h14l-4 3zM3 16l4-3h14l-4 3zM3 21l4-3h14l-4 3zM8 3v18M14 3v18', '#a4262e', 1.4)}</>,
  arcDots: <>{L('M17 4a9 9 0 0 0 0 16', '#333', 1.6)}<circle cx="17" cy="4" r="2" fill="#8aa" stroke="#333" /><circle cx="17" cy="20" r="2" fill="#8aa" stroke="#333" /><circle cx="13" cy="12" r="1.5" fill="#333" /></>,
  arcDots2: <>{L('M18 5a9 9 0 1 0 0 14', '#333', 1.6)}<circle cx="18" cy="5" r="2" fill="#8aa" stroke="#333" /><circle cx="18" cy="19" r="2" fill="#8aa" stroke="#333" /></>,
  lineDots: <>{L('M3 21 21 3', '#bcc3ca', 1.6)}<circle cx="5" cy="19" r="1.5" fill="#bcc3ca" /><circle cx="19" cy="5" r="1.5" fill="#bcc3ca" /></>,
  cornerW: <>{F('M2 4h20v18h-6V9H2z', '#6d92ad', '#3a5060')}{F('M2 4h20v5H2z', '#2e4658', '#2e4658')}</>,
  curveW: <>{L('M2 21h4c0-12 2-17 5-17s4 9 6 17h5', '#223', 1.6)}{F('M2 18h3v4H2zM19 18h3v4h-3z', '#223', '#223')}</>,
  sWave: <>{L('M3 20c0-8 8-3 9-9s8-7 9-1M3 14c0-6 4-4 6-8', '#3f6784', 3.2)}</>,
  hexC: <><circle cx="12" cy="12" r="10" fill="#6d92ad" stroke="#2e4658" strokeWidth="1.6" /></>,
  lC: <>{F('M2 8h20v8h-10v6H2z', '#6d92ad', '#24384a', 1.4)}{F('M2 4h20v4H2z', '#3f5f78', '#24384a', 1)}</>,
  beamB2: <>{F('M2 4h20v16h-7V10H2z', '#6d92ad', '#24384a', 1.2)}{F('M2 4h20v6H2z', '#2e4658', '#2e4658')}</>,
  bendC: <>{L('M3 22V14c0-6 4-10 11-10h7', '#6d92ad', 5)}<rect x="14" y="13" width="8" height="9" fill="none" stroke="#445" strokeDasharray="2 2" /></>,
  gridArrow: <>{F('M2 2h20v20H2z', '#eef3ee', '#111', 1.9)}{L('M2 12h20', '#111', 1.6)}{L('M12 4v16M9 7l3-3 3 3M9 17l3 3 3-3', '#1ea03c', 1.7)}</>,
  lYellow: <>{F('M3 4h10v7h8v10H3z', '#fff68a', '#1616a0', 1.8)}{L('M3 15h18M11 11v10', '#d8c800', 1.7)}{L('M14 2h7v7M2 17v6h6', '#e01020', 1.6)}</>,
  hatchLines: <>{L('M3 5h18M3 10h18M3 15h18M3 20h18', '#47586a', 1.7)}{L('M4 21 20 3', '#47586a', 1.5)}</>,
  hashSlant: <>{L('M2 8h20M2 16h20M9 2v20M16 2v20', '#47586a', 1.6)}{L('M4 21 20 3', '#47586a', 1.3)}</>,
  stepRed: <>{F('M3 4h10v8h9v9H3z', '#e5e5e5', '#222', 1.7)}{F('M3 10h10v4H3zM3 15h18v2H3z', '#c04a4a', '#222', .7)}</>,
  tableFade: <>{F('M2 8 9 4h13l-7 5z', '#a8bfce', '#a8bfce')}{L('M3 9v11M14 9v11M21 5v9', '#a8bfce', 2.2)}</>,
  arrowsGrid: <>{F('M2 2h20v20H2z', '#fff', '#1616a0', 1.8)}{L('M8 3v16M12 3v16M16 3v16', R, 1.4)}{F('M6 14h4l-2 5zM10 14h4l-2 5zM14 14h4l-2 5z', R, R)}</>,
  lDown: <>{F('M3 3h10v9h8v9H3z', '#fff', '#1616a0', 1.9)}{F('M8 14h8l-4 5z', R, R)}</>,
  anchor: <>{F('M9 2h6v7l7 6v3H2v-3l7-6z', '#6d92ad', '#3a5060')}</>,
  twoFoot: <>{F('M5 6h14v5H5z', '#6d92ad', '#3a5060')}{F('M5 11l3 7H1zM19 11l3 7h-7z', '#6d92ad', '#3a5060')}</>,
  lOut: <>{F('M16 2h5v20H5v-5h11z', '#f6f6f6', '#24384a', 2.2)}</>,
  lTall: <>{F('M8 2h5l1 9 4 3v3l-4 3-3 3-3-3-3-3v-3l3-3z', '#d5dde4', '#24384a', 1.6)}</>,
  layerStack: <>{L('M3 5l4-3h14l-4 3zM3 10l4-3h14l-4 3zM3 15l4-3h14l-4 3zM3 20l4-3h14l-4 3z', '#111', 1.4)}</>,
  layerStack2: <>{F('M2 8l6-5h14l-6 5z', '#e8ecef', '#111', 1.4)}{F('M2 13l6-5h14l-6 5z', '#e8ecef', '#111', 1.4)}{F('M2 18l6-5h14l-6 5z', '#e8ecef', '#111', 1.4)}</>,
}

const badge: Record<string, React.ReactNode> = {
  pen: <>{F('M12 13l3-3 8 9-2 4-4-1z', '#1e1e8c', '#0a0a50', .8)}{F('M12 13l-1-2 3-1z', '#e4b080', '#333', .6)}</>,
  doc: <>{F('M11 10h7l5 5v9H11z', '#fff', '#111', 1.5)}{L('M18 10v5h5', '#111', 1)}{L('M13.5 18h6M13.5 21h6', '#111', 1.3)}</>,
  rdoc: <>{F('M11 10h7l5 5v9H11z', '#fff', R, 1.6)}{L('M13.5 18h6M13.5 21h6', R, 1.3)}</>,
  cy: <>{L('M17 1h6v6M1 17v6h6', '#19dcec', 1.5)}</>,
  yl: <>{L('M17 1h6v6M1 17v6h6', '#e8cf1a', 1.6)}</>,
}

const Ic = ({ n, s = 22 }: { n: string; s?: number }) => {
  const [base, ...mods] = n.split('+')
  return (
    <svg width={s} height={s} viewBox="0 0 24 24" style={{ display: 'block', overflow: 'visible' }}>
      {S[base]}
      {mods.map((m) => <React.Fragment key={m}>{badge[m]}</React.Fragment>)}
    </svg>
  )
}

/* larger ribbon drawings, 48 box */
const grad = (id: string, a: string, b: string, vertical = true) => (
  <linearGradient id={id} x1="0" y1="0" x2={vertical ? 0 : 1} y2={vertical ? 1 : 0}><stop offset="0" stopColor={a} /><stop offset="1" stopColor={b} /></linearGradient>
)
const BIG: Record<string, React.ReactNode> = {
  gear: <><defs>{grad('gg', '#7d8d9c', '#27323e')}</defs><circle cx="22" cy="24" r="15" fill="url(#gg)" /><circle cx="22" cy="24" r="18" fill="none" stroke="url(#gg)" strokeWidth="7" strokeDasharray="7.1 7" /><circle cx="22" cy="24" r="6" fill="#f4f6f8" /></>,
  kat: <>{F('M2 4h44v40H2z', '#f0f0ec', '#9a9a96', 2)}{L('M8 36V22l14-5 0 14M8 36l14-5M8 28l14-5', '#8896a2', 1.5)}{L('M26 12h16M34 8v18M28 30h14v10H28zM28 35h14M35 30v10', '#9aa6b0', 1.3)}<circle cx="42" cy="8" r="1.6" fill={R} /></>,
  aks: <><circle cx="27" cy="10" r="7" fill="#fff" stroke="#333" strokeWidth="1.3" />{T(24, 14, 'A', '#333', 10, false)}<circle cx="7" cy="28" r="7" fill="#fff" stroke="#333" strokeWidth="1.3" />{T(4.5, 32, '1', '#333', 10, false)}{L('M27 17v29M14 28h28', '#555', 1.5)}</>,
  wall: <>{F('M2 14 38 2v36L2 46z', '#5a7487', '#3a4e5c')}{F('M38 2h6v36h-6z', '#2d3f4c', '#2d3f4c')}{L('M2 26 38 15M2 36 38 27M14 22v10M26 14v10M14 34v8M26 28v8', '#8ba0b0', 1.2)}</>,
  kolon: <><defs>{grad('kk', '#7ea0b8', '#dfeaf2', false)}</defs>{F('M6 3h36l-7 10v20l7 12H6l7-12V13z', 'url(#kk)', '#28323c', 1.8)}</>,
  kiris: <>{L('M19 1v14M14 10l5 6 5-6', '#333', 1.4)}{T(28, 13, 'N', '#333', 14, false)}{F('M2 18h44v7H2z', '#d6dfe6', '#6a7a88', 1)}{F('M10 25l7 11H2zM38 25l8 11H30z', '#6f92ab', '#3a4e5c', 1)}{L('M0 37h48', '#444', 1.4)}</>,
  perde: <><defs>{grad('pp', '#6d92ad', '#c4d8e6', false)}</defs>{F('M4 22 14 14h30L34 22v24H4z', 'url(#pp)', '#7a9ab2', 1)}{L('M14 18V3M26 16V1M38 16V3', '#6a7a88', 2.6)}</>,
  dos: <>{F('M2 20 22 6l26 10-22 14z', '#9db9cc', '#6d8da5', 1)}{F('M2 20l24 10v4L2 24z', '#557388', '#557388')}{F('M26 30 48 16v4L26 34z', '#3f5b70', '#3f5b70')}{L('M6 24v18M24 34v12M44 22v16', '#7f9db2', 2.4)}</>,
  kenar: <><g strokeDasharray="3 2.5">{L('M2 20 22 6l24 10M6 22v16M24 8v12', '#9aa8b4', 1.5)}</g>{L('M20 36 46 20', '#3f5b70', 3)}{L('M44 20v16M20 36v10', '#9aa8b4', 1.8)}</>,
  stair: <>{F('M46 2 46 8 38 8 38 20 28 20 28 31 18 31 18 42 4 46 4 40 12 28 22 28 22 16 32 16 32 4z', '#6f8fa5', '#4a6274', 1)}</>,
  surekli: <><defs>{grad('ss', '#5f84a0', '#d3e2ec')}</defs>{F('M16 4 28 2 38 8 38 22 46 36 46 44 34 46 4 46 4 34 14 20z', 'url(#ss)', '#5f7a8e', 1)}{L('M16 4 26 10 26 24 34 36 34 46', '#7a96aa', 1)}</>,
  radye: <>{F('M2 30 24 20l24 10-24 14z', '#8eaec2', '#6d8da5')}{F('M2 30l22 14v3L2 33z', '#4e6c82', '#4e6c82')}{F('M24 44l24-14v3L24 47z', '#385268', '#385268')}{L('M10 28V10M24 22V4M38 28V8M18 36V14M32 36V12', '#7f9db2', 2.8)}</>,
  radyek: <><g strokeDasharray="3 2.5">{L('M4 30 24 20l20 10M10 28V12M24 22V6M38 28V12', '#9aa8b4', 1.4)}</g>{L('M22 44l24-14', '#3f5b70', 3)}{L('M4 30l18 14', '#9aa8b4', 1.5)}</>,
  iskele: <>{L('M9 4v40M39 4v40M3 4h12M33 4h12M3 44h12M33 44h12', '#222', 2.6)}{L('M9 16h30', '#222', 2.2)}{L('M9 14h30', '#e6c82c', 2)}{L('M9 42 24 16l15 26', '#c8a02a', 2.4)}{L('M9 44h30', '#111', 1.6)}</>,
  tblB: <>{F('M3 3h42v42H3z', '#dfe5ea', '#b2bcc6', 2)}{F('M9 9h30v30H9z', '#f3f5f7', '#5b6f80', 1.4)}{F('M9 9h30v7H9z', '#5b6f80', '#5b6f80')}{L('M9 22h30M9 28h30M9 34h30M16 16v23M24 16v23M32 16v23', '#5b6f80', 1.1)}<circle cx="39" cy="7" r="1.6" fill={R} /></>,
  tblC: <>{L('M3 6c8 4 12 4 21 0s13 0 21 0M3 42c8-4 12-4 21 0s13 0 21 0', '#bfc7cf', 3.4)}{F('M10 10h28v28H10z', '#f6ecc6', '#a49a6c', 1.4)}{F('M10 10h28v7H10z', '#d8c482', '#a49a6c')}{L('M10 23h28M10 29h28M10 34h28M17 17v21M24 17v21M31 17v21', '#a49a6c', 1)}</>,
  docs: <>{F('M2 2h20l6 6v20H2z', '#f7f7f7', '#333', 1.3)}{F('M8 12h20l6 6v18H8z', '#fce6e6', '#ec6a6a', 1.5)}{F('M18 24h20l7 7v16H18z', '#fff', '#222', 1.6)}{L('M24 36h14M24 41h14', '#222', 1.6)}</>,
  kDoc: <>{F('M2 2h36l-7 10v24l7 10H2l7-10V12z', '#c4c8cc', '#222', 1.7)}{L('M13 6v36M18 6v36M23 6v36', '#6a6e72', 1.2)}{F('M20 20h16l9 9v18H20z', '#fff', '#111', 1.7)}{L('M26 36h12M26 41h12', '#111', 1.7)}</>,
  cDoc: <>{F('M2 46V20L12 2l6 16 10 2 10-6v10H28v22z', '#66737e', '#444', 1)}{F('M22 20h14l10 9v18H22z', '#fff', '#111', 1.7)}{L('M28 36h12M28 41h12', '#111', 1.7)}</>,
  led: <><defs><radialGradient id="lg"><stop offset="0" stopColor="#d6f2c6" /><stop offset=".7" stopColor="#87c878" /><stop offset="1" stopColor="#5f8e62" /></radialGradient></defs><rect x="6" y="2" width="36" height="44" rx="4" fill="#fff" stroke="#9aa0a6" strokeWidth="1.4" /><path d="M6 38h36v4a4 4 0 0 1-4 4H10a4 4 0 0 1-4-4z" fill="#bcbcbc" /><circle cx="24" cy="19" r="8" fill="url(#lg)" /></>,
  boltB: <>{F('M18 2h26L30 18h12L8 46l12-20H8z', '#c4c858', '#33381a', 1.6)}</>,
}
const BigIc = ({ n, w = 44, h = 44 }: { n: string; w?: number; h?: number }) => (
  <svg width={w} height={h} viewBox="0 0 48 48" preserveAspectRatio="none" style={{ display: 'block' }}>{BIG[n]}</svg>
)

/* ---------- page shell ---------- */
const Page = styled.div`
  width: 1920px; height: 1020px; display: flex; flex-direction: column; position: relative; overflow: hidden;
  background: #cfd4dd; font-family: ${FONT}; color: #3f4a55; letter-spacing: -0.25px;
`
const TitleBar = styled.div`
  height: 31px; background: #fff; display: flex; align-items: flex-start; flex: none;
`
const Logo = styled.div`
  position: absolute; left: 3px; top: 0; width: 52px; height: 52px; border-radius: 50%; z-index: 3;
  background: radial-gradient(circle at 50% 35%, #fafafa 0%, #e6e6e6 45%, #b5b5b5 75%, #7f7f7f 100%);
  border: 1px solid #8b8f94; display: flex; align-items: center; justify-content: center;
  font: 700 11px "Liberation Sans", sans-serif; letter-spacing: -0.4px;
  span { color: #8c8c8c; font-weight: 400; }
  b { color: #d2232a; }
`
const Qat = styled.div`
  margin-left: 48px; width: 589px; height: 26px; padding-left: 12px; display: flex; align-items: center;
  background: linear-gradient(#f4f6f9, #d8dde5); border-bottom: 1px solid #aeb6c1; border-right: 1px solid #c3c9d2;
  border-radius: 0 0 14px 0;
`
const Cell = styled.div<{ $w?: number; $on?: boolean }>`
  width: ${(p) => p.$w ?? 26}px; height: 24px; flex: none; display: flex; align-items: center; justify-content: center;
  ${(p) => p.$on && `background: linear-gradient(#ffe8b0, #ffb95a); border: 1px solid #d8a445; border-radius: 2px;`}
`
const Gap = styled.div<{ $w: number; $line?: boolean }>`
  width: ${(p) => p.$w}px; height: 24px; flex: none; position: relative;
  ${(p) => p.$line && `&::after { content: ''; position: absolute; left: 50%; top: 2px; bottom: 2px; width: 1px; background: #9aa3ae; }`}
`
const Chevron = styled.div<{ $c?: string }>`
  width: 0; height: 0; border-left: 4px solid transparent; border-right: 4px solid transparent; flex: none;
  border-top: 4px solid ${(p) => p.$c ?? '#8f98a3'};
`
const QatChev = styled.div`
  width: 16px; display: flex; justify-content: center;
`
const SmallMenu = styled.div`
  margin: 11px 0 0 8px; width: 8px; border-top: 1px solid #666; padding-top: 1px; display: flex; justify-content: center;
`
const Title = styled.div`
  margin-left: 208px; width: 700px; font-size: 15.2px; line-height: 29px; color: #2b2f35; white-space: nowrap; letter-spacing: -0.35px;
`
const WinBtns = styled.div`
  margin-left: auto; display: flex; width: 175px; height: 31px; padding-right: 3px;
`
const WinBtn = styled.div`
  width: 57px; display: flex; align-items: center; justify-content: center;
`

const TabRow = styled.div`
  height: 27px; flex: none; display: flex; align-items: stretch; padding-left: 60px; background: #cfd4dd;
`
const Tab = styled.div<{ $w: number; $on?: boolean }>`
  width: ${(p) => p.$w}px; font-size: 13px; display: flex; align-items: center; justify-content: center; white-space: nowrap; color: #46505b;
  ${(p) => p.$on && `background: linear-gradient(#fdfeff, #d9e9f9); border: 1px solid #a8c4de; border-bottom: none; border-radius: 3px 3px 0 0; margin-bottom: -1px; z-index: 1;`}
`
const Search = styled.div`
  margin: 1px 0 4px 8px; width: 266px; display: flex; align-items: center; background: #e5e8ec; border: 1px solid #b7bec8; padding-right: 6px;
`
const SearchInner = styled.div`
  width: 249px; height: 100%; background: #fff; display: flex; align-items: center; gap: 3px; padding-left: 3px;
  font-size: 10.5px; font-style: italic; color: #7b8590;
`
const ComboWrap = styled.div`
  display: flex; align-items: center; width: 62px; justify-content: space-around; border-left: 1px solid #9aa3ae; margin: 4px 0 6px 3px;
`
const Combo = styled.div`
  width: 166px; margin: 0 0 3px 0; background: #dde0e5; border: 1px solid #bcc3cc; display: flex; align-items: center; padding: 0 6px 0 3px;
  font-size: 13px; color: #1f2933; gap: 4px;
`
const Right = styled.div`
  margin-left: auto; display: flex; align-items: center;
`
const DimText = styled.span`
  font-size: 13px; line-height: 27px; color: #5b6570; margin: 0 10px 0 4px;
`
const ChevMid = styled.div`
  display: flex; align-items: center;
`

/* ---------- ribbon ---------- */
const RibbonBar = styled.div`
  height: 108px; flex: none; display: flex; padding-left: 3px; background: linear-gradient(#fafbfd, #eef1f5 70%, #e3e7ec);
`
const Group = styled.div<{ $w: number; $ml?: number; $pale?: boolean }>`
  width: ${(p) => p.$w}px; margin-left: ${(p) => p.$ml ?? 0}px; flex: none; display: flex; flex-direction: column;
  border: 1px solid ${(p) => (p.$pale ? '#dfe3e8' : '#a3abb6')}; border-radius: 3px;
  background: linear-gradient(#fbfcfe, #f1f4f7);
`
const GroupBody = styled.div`
  height: 85px; flex: none; display: flex; position: relative;
`
const GroupLabel = styled.div<{ $pale?: boolean }>`
  flex: 1; font-size: 13px; text-align: center; line-height: 22px; color: #55606b; white-space: nowrap;
  background: ${(p) => (p.$pale ? 'transparent' : 'linear-gradient(#e4e8ed, #ced3da)')};
`
const BigWrap = styled.div<{ $w: number; $ml?: number; $on?: boolean }>`
  width: ${(p) => p.$w}px; margin-left: ${(p) => p.$ml ?? 0}px; flex: none; display: flex; flex-direction: column; align-items: center;
  font-size: 13px; line-height: 19px; color: #46505b; white-space: nowrap; height: 85px;
  ${(p) => p.$on && `margin-top: 2px; height: 82px; background: linear-gradient(#ffe0ac 0, #ffc985 45%, #ffa744 62%, #ffe48f 62.5%, #ffd56b 100%); border: 1px solid #e8bf5f; border-radius: 2px;`}
`
const BigIcon = styled.div<{ $on?: boolean }>`
  height: ${(p) => (p.$on ? 46 : 48)}px; flex: none; display: flex; align-items: center; justify-content: center; padding-top: 2px;
`
const BigLine = styled.div`
  height: 19px; display: flex; align-items: center; gap: 3px;
`
const SmallCol = styled.div<{ $w: number; $start?: boolean; $pl?: number }>`
  width: ${(p) => p.$w}px; flex: none; display: flex; flex-direction: column; align-items: ${(p) => (p.$start ? 'flex-start' : 'center')}; padding-left: ${(p) => p.$pl ?? 0}px;
`
const SmallCell = styled.div`
  height: 27px; flex: none; display: flex; align-items: center; gap: 8px; white-space: nowrap;
`
const RSep = styled.div<{ $ml?: number }>`
  width: 1px; height: 68px; margin: 8px 0 0 ${(p) => p.$ml ?? 0}px; background: #c6ccd3; flex: none;
`
const CheckRow = styled(SmallCell)`
  gap: 0; margin-left: -1px;
`
const CheckLabel = styled.span`
  font-size: 13.5px; color: #46505b; margin-left: 5px;
`
const CheckBox = styled.div`
  width: 15px; height: 15px; background: linear-gradient(#dfe3e8, #fff); border: 1px solid #6f7882; display: flex; align-items: center; justify-content: center;
`
const MenuArrow = styled(Chevron)`
  border-width: 6px 6px 0 6px; margin-top: 2px;
`

const Big = ({ w, ml, ic, l1, l2, arrow = true, on, iw = 44, ih = 44 }: { w: number; ml?: number; ic: string; l1: string; l2?: string; arrow?: boolean; on?: boolean; iw?: number; ih?: number }) => (
  <BigWrap $w={w} $ml={ml} $on={on}>
    <BigIcon $on={on}><BigIc n={ic} w={iw} h={ih} /></BigIcon>
    <BigLine>{l1}</BigLine>
    <BigLine>{l2}{arrow && <MenuArrow $c="#6b747e" />}</BigLine>
  </BigWrap>
)
const Smalls = ({ w, items }: { w: number; items: string[] }) => (
  <SmallCol $w={w}>
    {items.map((n, i) => <SmallCell key={i}><Ic n={n} s={22} /></SmallCell>)}
  </SmallCol>
)

const Ribbon = () => (
  <RibbonBar>
    <Group $w={190}>
      <GroupBody>
        <Big w={60} ic="gear" l1="Analiz" l2="Ayarları" arrow={false} />
        <Big w={44} ic="kat" l1="Kat" l2="listesi" iw={42} ih={42} />
        <SmallCol $w={82} $start $pl={7}>
          <SmallCell><Ic n="gridStack" s={22} /></SmallCell>
          <SmallCell><Ic n="floorsRed" s={22} /></SmallCell>
          <CheckRow>
            <CheckBox><svg width="13" height="13" viewBox="0 0 13 13">{L('M2 7l3 4 6-9', '#2c4e8c', 2)}</svg></CheckBox>
            <CheckLabel>Yarı Rijit</CheckLabel>
          </CheckRow>
        </SmallCol>
      </GroupBody>
      <GroupLabel>Proje Ayarları</GroupLabel>
    </Group>
    <Group $w={86} $ml={5}>
      <GroupBody>
        <Big w={56} ic="aks" l1="Aks" />
        <Smalls w={18} items={['arcDots', 'arcDots2', 'lineDots']} />
      </GroupBody>
      <GroupLabel>Aks</GroupLabel>
    </Group>
    <Group $w={86} $ml={5}>
      <GroupBody>
        <Big w={58} ic="wall" l1="Duvar" />
        <Smalls w={14} items={['cornerW', 'curveW', 'sWave']} />
      </GroupBody>
      <GroupLabel>Duvar</GroupLabel>
    </Group>
    <Group $w={513} $ml={5}>
      <GroupBody>
        <Big w={48} ml={4} ic="kolon" l1="Kolon" on iw={40} ih={42} />
        <Smalls w={28} items={['hexC', 'lC', 'funnel']} />
        <RSep $ml={5} />
        <Big w={60} ic="kiris" l1="Kiriş" />
        <Smalls w={16} items={['beamB2', 'sWave', 'bendC']} />
        <RSep $ml={11} />
        <Big w={56} ml={2} ic="perde" l1="Perde" />
        <RSep />
        <Big w={56} ml={4} ic="dos" l1="Döşeme" />
        <Smalls w={24} items={['capsule', 'gridArrow', 'lYellow']} />
        <Smalls w={34} items={['hatchLines', 'hashSlant', 'stepRed']} />
        <Smalls w={28} items={['tableFade', 'arrowsGrid', 'lDown']} />
        <Big w={62} ic="kenar" l1="Döşeme" l2="Kenarı" />
        <RSep />
        <Big w={70} ic="stair" l1="Merdiven" />
      </GroupBody>
      <GroupLabel>Betonarme</GroupLabel>
    </Group>
    <Group $w={286} $ml={5}>
      <GroupBody>
        <Big w={60} ic="surekli" l1="Sürekli" l2="Temel" />
        <SmallCol $w={41} $start>
          <SmallCell><Ic n="anchor" s={22} /><Chevron /></SmallCell>
          <SmallCell><Ic n="combB" s={22} /><Chevron /></SmallCell>
          <SmallCell><Ic n="twoFoot" s={22} /><Chevron /></SmallCell>
        </SmallCol>
        <Smalls w={37} items={['lOut', 'lTall', 'blank']} />
        <RSep />
        <Big w={58} ic="radye" l1="Radye" />
        <Smalls w={20} items={['capsule', 'gridArrow', 'lYellow']} />
        <Big w={67} ic="radyek" l1="Radye" l2="Kenarı" />
      </GroupBody>
      <GroupLabel>Temel - Zemin</GroupLabel>
    </Group>
    <Group $w={91} $ml={3}>
      <GroupBody><Big w={89} ic="iskele" l1="İskele" l2="Makrosu" /></GroupBody>
      <GroupLabel>İskele Ayarları</GroupLabel>
    </Group>
    <Group $w={128} $ml={3}>
      <GroupBody>
        <Big w={80} ic="tblB" l1="Betonarme" />
        <Big w={40} ic="tblC" l1="Çelik" />
      </GroupBody>
      <GroupLabel>Tasarım</GroupLabel>
    </Group>
    <Group $w={217} $ml={4}>
      <GroupBody>
        <Big w={62} ic="docs" l1="Seçmeli" l2="Raporlar" arrow={false} />
        <Smalls w={22} items={['redAr+doc', 'redAr2+doc', 'redDoc']} />
        <RSep $ml={3} />
        <Big w={80} ic="kDoc" l1="Betonarme" />
        <Big w={42} ic="cDoc" l1="Çelik" />
      </GroupBody>
      <GroupLabel>Raporlar</GroupLabel>
    </Group>
    <Group $w={66} $ml={4} $pale>
      <GroupBody><Big w={64} ic="led" l1="Çizim" l2="Oluştur" /></GroupBody>
      <GroupLabel $pale />
    </Group>
    <Group $w={110} $ml={3} $pale>
      <GroupBody><Big w={108} ic="led" l1="Analiz ve Tasarım" l2="Görüntüleme" /></GroupBody>
      <GroupLabel $pale />
    </Group>
    <Group $w={73} $ml={3}>
      <GroupBody><Big w={71} ic="boltB" l1="Analiz" l2="Tasarım" /></GroupBody>
      <GroupLabel>Analiz</GroupLabel>
    </Group>
  </RibbonBar>
)

/* ---------- tool rows ---------- */
const ToolRow = styled.div`
  height: 36px; flex: none; display: flex; padding-top: 4px; align-items: flex-start; background: #cfd4dd;
`
const Toolbar = styled.div<{ $w: number; $ml?: number; $pl?: number }>`
  width: ${(p) => p.$w}px; margin-left: ${(p) => p.$ml ?? 0}px; height: 30px; padding: 3px 0 0 ${(p) => p.$pl ?? 8}px; display: flex; position: relative;
  background: linear-gradient(#f4f7fb, #dbe0e8); border-radius: 4px;
`
const HGrip = styled.div`
  position: absolute; left: 4px; top: 6px; bottom: 6px; width: 2px;
  background-image: linear-gradient(#8b95a1 50%, transparent 50%); background-size: 2px 3px;
`
const ChevBtn = styled.div`
  position: absolute; right: 0; top: 0; width: 12px; height: 30px; display: flex; flex-direction: column; align-items: center; justify-content: flex-end; padding-bottom: 4px;
  background: linear-gradient(#d7dce4, #bfc5cf); border-radius: 0 4px 4px 0;
`
const EndChev = styled.div`
  margin-left: 7px; width: 17px; height: 30px; display: flex; align-items: flex-end; justify-content: center; padding-bottom: 4px;
`
type Grp = { w: number; gap?: number; items: string[] }
const TB = ({ groups }: { groups: Grp[] }) => (
  <>
    {groups.map((g, i) => (
      <React.Fragment key={i}>
        {i > 0 && <Gap $w={g.gap ?? 5} $line={g.gap !== 0} />}
        {g.items.map((n, k) => (
          <Cell key={k} $w={g.w} $on={n.startsWith('!')}><Ic n={n.replace('!', '')} s={21} /></Cell>
        ))}
      </React.Fragment>
    ))}
  </>
)
const T1: Grp[] = [
  { w: 29, items: ['zoomA', 'zoomW'] },
  { w: 30, gap: 5, items: ['rulerPen', 'pencil', 'tag'] },
  { w: 29, gap: 5, items: ['compass', 'diamond'] },
  { w: 28, gap: 5, items: ['move', 'moveGrid', 'rotate', 'mirrorAxis', 'mirror', 'ibeamRed', 'scatter'] },
  { w: 25.2, gap: 14, items: ['trim', 'brk', 'stamp', 'flagBars', 'starCross', 'xcross', 'crossCy', 'wallS', 'corner', 'corner2', 'boxNodes', 'dynamite'] },
  { w: 27, gap: 10, items: ['nodesGrid', 'doorBox', 'mesh'] },
  { w: 28, gap: 10, items: ['picture', 'textA', 'zig', 'curve', 'circle', 'cloud', 'hatchTri', 'nodesZig', 'plus2', 'qbrace', 'm2', 'angleQ', 'mm2'] },
  { w: 28, gap: 9, items: ['levels', 'eye'] },
  { w: 28, gap: 7, items: ['sheet', 'sheet2'] },
  { w: 28, gap: 7, items: ['upArrow', 'crossAxes'] },
  { w: 28, gap: 10, items: ['xy', 'zz', 'p3', 'target'] },
]
const T2: Grp[] = [
  { w: 28, items: ['capsule', 'stairsY', 'dome', 'nut', 'lY', 'tagB', 'graph', 'graphP', 'graphQ', 'spectrum', 'bolt'] },
  { w: 28, gap: 9, items: ['!frameRed'] },
]

/* ---------- side bars ---------- */
const Main = styled.div`
  flex: 1; display: flex; min-height: 0;
`
const LeftBar = styled.div`
  width: 32px; flex: none; padding-left: 1px;
`
const VBar = styled.div<{ $h?: number; $w?: number }>`
  width: ${(p) => p.$w ?? 30}px; ${(p) => p.$h && `height: ${p.$h}px;`} flex: none; display: flex; flex-direction: column; align-items: center;
  background: linear-gradient(90deg, #eef1f6, #dde2ea); border-radius: 3px 3px 0 0;
`
const VGrip = styled.div`
  height: 8px; width: 14px; margin-top: 2px; flex: none;
  background-image: linear-gradient(90deg, #fff 50%, transparent 50%); background-size: 3px 2px; background-repeat: repeat-x; background-position: 0 3px;
`
const VCell = styled.div`
  height: 26px; width: 100%; flex: none; display: flex; align-items: center; justify-content: center;
`
const VSep = styled.div`
  height: 8px; width: 18px; flex: none; display: flex; align-items: center;
  &::after { content: ''; display: block; width: 100%; height: 1px; background: #a8b0ba; }
`
const VFoot = styled.div<{ $dbl?: boolean }>`
  width: 100%; height: 14px; margin-top: auto; flex: none; display: flex; align-items: center; justify-content: ${(p) => (p.$dbl ? 'space-between' : 'flex-end')}; padding: 0 3px;
  background: linear-gradient(#c4c9d1, #adb3bc); border-radius: 0 0 5px 5px; font-size: 8px; color: #eef0f3;
`
const VList = ({ items }: { items: string[] }) => (
  <>
    {items.map((n, i) => (n === '-' ? <VSep key={i} /> : <VCell key={i}><Ic n={n} s={21} /></VCell>))}
  </>
)
const LEFT = ['listDoc', '-', 'sel1', 'sel2', 'sel3', 'sel4', 'sel5', '-', 'qbrace', '-', 'noteDoc', '-', 'floorsRed', 'copyDoc', 'paste', 'dupA', 'dupB', 'dupC', 'dots8', '-', 'slabCut', 'wallEnd', 'perdeS', 'cutLine', 'tPurple', '-', 'mix', '-', 'autoabc', '-', 'binoc']

const Dock = styled.div`
  width: 123px; flex: none; display: flex; align-items: flex-start;
`
const RaporTab = styled.div`
  width: 23px; height: 134px; margin: 3px 1px 0 4px; flex: none; writing-mode: vertical-rl; font-size: 13.5px; color: #66727f; line-height: 22px; padding-top: 1px;
  background: linear-gradient(90deg, #ffe9b0, #ffd47e); border: 1px solid #d9c89a; white-space: nowrap;
`
const DockCol = styled.div<{ $w: number; $ml?: number }>`
  width: ${(p) => p.$w}px; margin-left: ${(p) => p.$ml ?? 0}px; flex: none; display: flex; flex-direction: column; gap: 1px; height: 100%;
`
const COL_A = ['gridG', 'nodesR+pen', 'wallS+pen', 'ibeamV+pen', 'beamB+pen', 'stepS+pen', 'gridL+pen', 'gridPillar', 'trap+pen', 'boxTrap+pen', 'capB+pen', 'crossS', 'lBlue+pen', 'tBlue+pen', 'yS+pen', 'comb+pen', 'arcS+pen', 'archG', 'stripes', 'flatG', 's123']
const COL_B = ['brick+cy', 'gridBlue', 'stepS+cy', 'gridL+cy', '-', 'loadBeam+cy', 'colS+cy', 'funnel', 'slant+cy', 'uG+cy', '-', 'trap+cy', 'boxTrap+cy', 'capB+cy', 'lWhite+cy', '-', 'lTall+cy', 'lOut+cy', 'stairBrick+cy', 'comb+cy', 'arcS+cy', '-', 'profile', 'tile']
const COL_B2 = ['cols3+yl', 'channel+yl', 'gridBig+yl', 'boxDot+yl', 'boxT+yl', 'arrowsZ+yl', 'iPlate+yl', 'railTrack+yl']
const COL_C = ['docR+doc', '-', 'checks+doc', 'checks+doc', 'checks+doc', 'lDoc+doc', 'rainbow', '-', 'loadBeam+doc', 'stepS+doc', 'gridL+doc', 'colS+doc', 'boxS+doc', 'cubeS+doc', 'arrowBeam+doc', 'trap+doc', 'capB+doc', 'rectB+doc', 'rectB+doc', 'combB+doc', '-', 'stairY+rdoc', 'domeY+rdoc', 'lBlue2+doc', 'tBlue2+doc', '-', 'redAr+doc', 'redAr2+doc', 'colBox+doc', '-', 'graphD+doc', '-', 'redDoc']

/* ---------- tree ---------- */
const CenterCol = styled.div`
  width: 1765px; flex: none; display: flex; flex-direction: column;
`
const Upper = styled.div`
  flex: 1; display: flex; min-height: 0;
`
const TreePanel = styled.div`
  width: 253px; flex: none; display: flex; flex-direction: column; background: #f0f0f0; border-left: 2px solid #8c949e; margin-bottom: 2px;
`
const TreeHead = styled.div`
  height: 29px; flex: none; display: flex; align-items: center; padding: 0 9px 0 3px; font-size: 14px; color: #4f5b68;
  background: linear-gradient(#c3c9d0, #a9b0b9); gap: 6px;
`
const HeadBtn = styled.div<{ $auto?: boolean }>`
  ${(p) => p.$auto && 'margin-left: auto;'} width: 14px; height: 14px; display: flex; align-items: center; justify-content: center;
`
const TreeRowBox = styled.div`
  flex: 1; display: flex; min-height: 0;
`
const TreeBody = styled.div`
  width: 226px; height: 742px; flex: none; background: #fff; overflow: hidden; position: relative;
`
const TreeTrack = styled.div`
  flex: 1; position: relative;
`
const VThumb = styled.div`
  position: absolute; left: 8px; top: 252px; width: 3px; height: 314px; background: #8c8c8c; border-radius: 2px;
`
const HThumb = styled.div`
  height: 20px; display: flex; align-items: center; padding-left: 21px;
  &::after { content: ''; display: block; width: 128px; height: 3px; background: #8c8c8c; border-radius: 2px; }
`
const Guide = styled.div<{ $x: number; $top: number; $h: number }>`
  position: absolute; left: ${(p) => p.$x - 34}px; top: ${(p) => p.$top - 231}px; height: ${(p) => p.$h}px; width: 1px;
  border-left: 1px dotted #777;
`
const Row = styled.div<{ $x: number; $tick?: boolean }>`
  height: 22px; display: flex; align-items: center; padding-left: ${(p) => p.$x - 62}px; white-space: nowrap; position: relative;
  font-size: 14.5px; color: #14263a; letter-spacing: 0;
  ${(p) => p.$tick && `&::before { content: ''; position: absolute; left: ${p.$x - 53}px; width: 9px; top: 11px; border-top: 1px dotted #777; }`}
`
const ExpSlot = styled.div`
  width: 19px; flex: none; display: flex; justify-content: center; position: relative; z-index: 1;
`
const Exp = styled.div`
  width: 11px; height: 11px; background: linear-gradient(#fff, #d5d9df); border: 1px solid #8b929b; display: flex; align-items: center; justify-content: center; position: relative;
  &::before { content: ''; width: 7px; height: 1px; background: #2a4a86; }
`
const ExpPlus = styled(Exp)`
  &::after { content: ''; position: absolute; left: 4px; top: 1px; width: 1px; height: 7px; background: #2a4a86; }
`
const IconSlot = styled.div`
  width: 18px; flex: none; display: flex; justify-content: center; margin-right: 4px; background: #fff; position: relative; z-index: 1;
`
const treeIcons: Record<string, React.ReactNode> = {
  specR: <>{L('M2 2v12h14M3 11c2-7 4-7 8 1', '#a01020', 1.3)}{L('M13 1v5M10.500 3.500h5', R, 1.3)}</>,
  specR0: <>{L('M2 2v12h14M3 11c2-7 4-7 8 1', '#a01020', 1.3)}</>,
  specB: <>{L('M2 2v12h14M3 11c2-7 4-7 8 1', '#1616a0', 1.3)}{L('M13 1v5M10.500 3.500h5', R, 1.3)}</>,
  folderW: <>{F('M1 4h5l1 1h8v9H1z', '#e9de70', '#6a5a10')}{L('M3 9l2-2 2 4 2-4 2 4 2-2', '#2030a0', 1)}</>,
  fT: <>{L('M2 2v12h14', '#111', 1.1)}{L('M3 6v6M5 7h3v5', R, 1.2)}{L('M13 1v5M10.500 3.500h5', R, 1.2)}</>,
  wave: <>{L('M2 2v12h14', '#111', 1.1)}{L('M3 9l2-3 2 5 2-5 2 5 2-4', '#1616a0', 1.1)}{L('M13 1v4M11 3h4', R, 1.1)}</>,
  folderR: <>{F('M1 6h14v8H1z', '#e8d888', '#222')}{F('M1 2h8v5H1z', '#e03a20', '#a02010')}</>,
  folderE: <>{F('M1 4h5l1 1h8v9H1z', '#f0e080', '#8a7a20')}{L('M4 12c0-4 2-3 2-7', '#111', 2)}{L('M3 13h6', '#111', 1.6)}</>,
  folderC: <>{F('M1 4h5l1 1h8v9H1z', '#f0e080', '#8a7a20')}{L('M3 9h9M3 7v4M12 7v4', '#1616a0', 1.2)}</>,
  layers: <>{L('M3 5l3-2h8l-3 2zM3 8l3-2h8l-3 2zM3 11l3-2h8l-3 2zM3 14l3-2h8l-3 2z', '#111', 1)}</>,
  page: <>{F('M3 1h8l3 3v11H3z', '#fff', '#111', 1.2)}{L('M11 1v3h3', '#111', 1)}{L('M4 15h10', '#777', 1.4)}</>,
  folderY: <>{F('M1 3h5l2 2h8v9H1z', '#fff6a0', '#b0a050')}{F('M1 6h15v8H1z', '#f8e68a', '#b0a050')}</>,
  box: <>{F('M3 2h9l1 1v10H3z', '#fff', '#111', 1.5)}</>,
}
const TreeIc = ({ n }: { n: string }) => <svg width="17" height="16" viewBox="0 0 17 16" style={{ display: 'block' }}>{treeIcons[n]}</svg>

type TR = [number, string, string, ('-' | '+' | '')?, boolean?]
const TREE: TR[] = [
  [121, 'specR', 'Tasarım Spektrumu', '-'],
  [140, 'specR0', 'RSF1', '', true],
  [121, 'specB', 'Tasarım Spektrumu', '-'],
  [140, 'specB', 'Ex', '', true], [140, 'specB', 'Ey', '', true], [140, 'specB', "Ex'", '', true], [140, 'specB', "Ey'", '', true],
  [102, 'folderW', 'Zaman Tanım Alanı Analizi', '-'],
  [121, 'fT', 'Zaman Tanım Alanı', '', true], [121, 'wave', 'Zaman Tanım Alanı', '', true],
  [102, 'folderR', 'Nonlineer İtme Analizi', '', true], [102, 'folderE', 'Euler Burkulma Analizi', '', true],
  [102, 'folderC', 'Yükleme Kombinasyonları', '+'],
  [84, 'layers', 'Çizimler', '-'],
  [102, 'page', '4. KAT', '', true], [102, 'page', '3. KAT', '', true], [102, 'page', '2. KAT', '', true], [102, 'page', '1. KAT', '', true], [102, 'page', 'ZEMİN KAT', '', true], [102, 'page', 'BODRUM KAT', '', true],
  [102, 'layers', 'Betonarme Çizimleri', '', true], [102, 'layers', 'Çelik Çizimleri', '', true], [102, 'layers', 'Diğer Çizimler', '', true],
  [63, 'folderY', 'Sonuç', '-'],
  [84, 'box', 'Proje Hataları', '', true], [84, 'box', 'Yapı Özet Bilgileri', '', true],
  [84, 'box', 'Açıklama Bilgileri', '+'], [84, 'box', 'Yapı Kat ve Yük Bilgileri', '+'], [84, 'box', 'Dinamik Analiz', '+'], [84, 'box', 'Yapı Düzensizlikleri', '+'],
  [84, 'box', 'Döşemeler', '+'], [84, 'box', 'Kirişler', '+'], [84, 'box', 'Kolonlar', '+'], [84, 'box', 'Perdeler', '+'],
]
const GUIDES = [[45, 231, 519], [64, 231, 299], [83, 231, 276], [102, 231, 56], [121, 254, 11], [121, 298, 77], [102, 408, 33], [83, 530, 176], [64, 761, 209]]

/* ---------- CAD view ---------- */
const Views = styled.div`
  flex: 1; display: flex; flex-direction: column; min-width: 0;
`
const ViewRow = styled.div`
  height: 728px; flex: none; display: flex; gap: 2px;
`
const ViewBox = styled.div<{ $w: number }>`
  width: ${(p) => p.$w}px; flex: none; background: #fff; position: relative; overflow: hidden; box-shadow: inset 0 0 0 1px #a4acb7;
`
const Svg = styled.svg`
  display: block; width: 100%; height: 100%;
`
const CornerBtns = styled.div`
  position: absolute; right: 2px; top: 2px; display: flex; gap: 1px;
`
const CornerBtn = styled.div`
  width: 21px; height: 19px; background: linear-gradient(#d8d8d8, #b4b4b4); border: 1px solid #404040; box-shadow: inset 1px 1px 0 #fff; display: flex; align-items: center; justify-content: center;
`
const ViewCaption = styled.div`
  position: absolute; left: 6px; top: 4px; font-size: 13.5px; line-height: 18px; color: #5c5c5c; letter-spacing: 0;
`
const Legend = styled.div`
  position: absolute; left: 5px; top: 39px; width: 110px;
`
const LegendBand = styled.div<{ $c: string }>`
  height: 100px; display: flex; align-items: center; font-size: 13.5px; color: #333; letter-spacing: -0.2px;
  &::before { content: ''; width: 31px; height: 100%; background: ${(p) => p.$c}; margin-right: 2px; flex: none; }
`
const Command = styled.div`
  height: 60px; margin-top: 5px; flex: none; background: #f0f0f0; border-top: 1px solid #c7ccd3; padding: 1px 0 0 2px;
  font-size: 12.8px; line-height: 17px; color: #1c1c1c; white-space: nowrap; letter-spacing: -0.2px;
`
const Status = styled.div`
  height: 25px; flex: none; display: flex; font-size: 14px; letter-spacing: 0; color: #4a5560;
  background: linear-gradient(#d7dadf, #a9aeb6 50%, #b3b8bf); border-top: 1px solid #e8eaed;
`
const StatusCell = styled.div<{ $w?: number; $pl?: number }>`
  ${(p) => (p.$w ? `width: ${p.$w}px; flex: none;` : 'flex: 1;')} border-right: 1px solid #8a9099; line-height: 24px; padding-left: ${(p) => p.$pl ?? 6}px; white-space: nowrap;
`

const V = (x: number, y1: number, y2: number, c: string, w = 1) => <line key={`${x}-${y1}-${c}`} x1={x + (w % 2 ? .5 : 0)} x2={x + (w % 2 ? .5 : 0)} y1={y1} y2={y2} stroke={c} strokeWidth={w} />
const H = (y: number, x1: number, x2: number, c: string, w = 1, dash?: string) => <line key={`h${y}-${x1}`} y1={y + (w % 2 ? .5 : 0)} y2={y + (w % 2 ? .5 : 0)} x1={x1} x2={x2} stroke={c} strokeWidth={w} strokeDasharray={dash} />
const ORANGE = '#c8915c'
const BLUE = '#333399'
const GREEN = '#118a11'
const DASH = '90 15 15 15'

const RedText = styled.text`
  fill: #ff0000; font-family: "Liberation Sans", Arial, sans-serif; font-size: 25px;
`
const SideText = styled(RedText)`
  font-size: 20.5px;
`
const HATCH_DOTS = [[0, 0], [3, 1], [6, 0], [1, 3], [5, 2], [7, 4], [2, 5], [4, 6], [0, 6], [6, 7], [3, 4]]
const Cad = () => (
  <Svg viewBox="286 202 761 728" preserveAspectRatio="none">
    <defs>
      <pattern id="hatch" width="8" height="8" patternUnits="userSpaceOnUse">
        <rect width="8" height="8" fill="#f3f3f3" />
        {HATCH_DOTS.map(([x, y], i) => <rect key={i} x={x} y={y} width="1" height="1" fill={i % 3 === 0 ? '#b0b0b0' : '#c8c8c8'} />)}
      </pattern>
      <pattern id="purp" width="4" height="4" patternUnits="userSpaceOnUse">
        <rect width="4" height="4" fill="#9d9dc9" />
        <path d="M0 4 4 0" stroke="#a9a9c9" strokeWidth=".8" />
      </pattern>
    </defs>
    <rect x="286" y="202" width="426" height="728" fill="#e9f3f6" />
    <rect x="712" y="202" width="31" height="728" fill="url(#hatch)" />
    <rect x="286" y="514" width="426" height="119" fill="url(#hatch)" />
    {H(229, 743, 1046, '#dcdce8', 1)}{H(468, 743, 1046, '#dcdce8', 1)}{H(707, 743, 1046, '#dcdce8', 1)}
    {V(823, 202, 930, '#dcdce8')}
    {[327, 339, 447, 507, 518, 566, 578, 626, 638, 686, 698].map((x) => V(x, 203, 514, ORANGE))}
    {[387, 398].map((x) => V(x, 203, 514, BLUE))}
    {V(459, 203, 514, BLUE, 3)}
    {[294, 306, 354, 366, 474, 485, 533, 545, 593, 605].map((x) => V(x, 633, 929, ORANGE))}
    {[414, 425, 652, 664].map((x) => V(x, 633, 929, BLUE))}
    {V(406, 633, 929, BLUE, 3)}
    {[[306, 354], [366, 414], [425, 474], [485, 533], [545, 593], [605, 652], [664, 712], [286, 294]].map(([a, b]) => H(633, a, b, '#808080', 1))}
    {H(307, 286, 712, GREEN, 3)}{H(300, 288, 300, GREEN)}{H(316, 288, 300, GREEN)}
    {H(875, 286, 712, GREEN, 3)}{H(867, 288, 300, GREEN)}{H(884, 288, 300, GREEN)}
    <text x="684" y="306" fontSize="24" fill="#3f9a3f" fontFamily="Liberation Sans, sans-serif">1</text>
    <text x="684" y="874" fontSize="24" fill="#3f9a3f" fontFamily="Liberation Sans, sans-serif">1</text>
    {H(391, 286, 450, BLUE)}{H(391, 468, 702, BLUE)}
    <path d="M701 387v8l11-4z" fill={BLUE} />
    {V(450, 374, 408, BLUE)}{V(468, 374, 408, BLUE)}
    <rect x="709.500" y="203.500" width="36" height="48" fill="url(#purp)" stroke="#2f2f8a" />
    <line x1="743" x2="743" y1="251" y2="930" stroke="#ff0000" strokeWidth="3" />
    <rect x="712.500" y="514.500" width="30" height="118" fill="none" stroke="#6a2fd8" />
    <rect x="563.500" y="513" width="179" height="34" fill="url(#purp)" stroke="#ff0000" strokeWidth="3.500" />
    <rect x="712.500" y="514.500" width="30" height="32" fill="none" stroke="#6a2fd8" />
    <rect x="651" y="528" width="2" height="2" fill="#b040d0" /><rect x="726.500" y="528" width="2" height="2" fill="#b040d0" />
    <path d="M718 573h19M727.500 564v18M721 567l13 12M734 567l-13 12" stroke="#f03a10" strokeWidth=".9" />
    <rect x="726.500" y="572" width="2" height="2" fill="#3030d0" />
    {H(514, 748, 1046, '#555', 1, DASH)}
    {H(693, 748, 1046, '#555', 1, DASH)}
    {H(693, 327, 704, '#555', 1, DASH)}
    {H(693, 286, 313, '#555', 1)}
    <SideText x="478" y="505.500">S11</SideText>
    <SideText x="749" y="505.500">150/30</SideText>
    <RedText transform="translate(717 276) rotate(90)">K48</RedText>
    <RedText transform="translate(717 341) rotate(90)">25/50</RedText>
    <RedText transform="translate(717 659) rotate(90)">K47</RedText>
    <RedText transform="translate(717 723) rotate(90)">25/50</RedText>
    <text x="408" y="663" fontSize="25" fill="#3a3aa0" fontFamily="Liberation Sans, sans-serif">2</text>
    <text x="281" y="679" fontSize="29" fill="#333388" fontFamily="Liberation Sans, sans-serif">7 kN/m²</text>
    <text x="284" y="709" fontSize="29" fill="#333388" fontFamily="Liberation Sans, sans-serif">'m²</text>
  </Svg>
)

/* ---------- 3D view, coordinates are the 1525 x 1543 space of the scene ---------- */
const G = '#00fa55'
const PINK = '#ff0000'
const OL = '#6e8f2e'
const EDGE = '#0b3d1c'
const MINT = '#5cf5a2'
const pts = (a: number[]) => a.join(' ')
const Pg = ({ p, f = G, s = EDGE, w = 1.6, o }: { p: number[]; f?: string; s?: string; w?: number; o?: number }) => (
  <polygon points={pts(p)} fill={f} stroke={s} strokeWidth={w} opacity={o} />
)
/* strip along a line with a red lip and an olive beam below it */
const Beam = ({ a, b, lip = 10, h = 30 }: { a: number[]; b: number[]; lip?: number; h?: number }) => (
  <>
    <polygon points={pts([a[0], a[1], b[0], b[1], b[0], b[1] + lip, a[0], a[1] + lip])} fill={PINK} />
    <polygon points={pts([a[0], a[1] + lip, b[0], b[1] + lip, b[0], b[1] + lip + h, a[0], a[1] + lip + h])} fill={OL} />
  </>
)
type FL = { top: number[]; bot: number[]; beams: number[][]; deck: number[]; rim: number[][]; mint: number[][] }
const floorData: FL[] = [
  {
    top: [285, 1385, 840, 1270, 1140, 1205, 1530, 1125], bot: [285, 1425, 838, 1312, 1140, 1240, 1530, 1160],
    deck: [375, 1170, 1530, 985, 1530, 1125, 1140, 1205, 840, 1270, 285, 1385],
    beams: [[345, 1285, 790, 1195], [830, 1190, 1060, 1135], [1085, 1128, 1320, 1075], [1330, 1070, 1530, 1025]],
    rim: [[285, 1385, 345, 1285], [840, 1270, 790, 1195], [1140, 1205, 1075, 1130], [1350, 1155, 1290, 1085]],
    mint: [[380, 1180, 440, 1170, 385, 1265, 355, 1270], [1420, 1090, 1500, 1075, 1480, 1120, 1440, 1125]],
  },
  {
    top: [243, 1195, 850, 1100, 1165, 1040, 1530, 985], bot: [245, 1243, 850, 1145, 1165, 1075, 1530, 1020],
    deck: [360, 1000, 1530, 840, 1530, 985, 1165, 1040, 850, 1100, 243, 1195],
    beams: [[310, 1110, 815, 1035], [830, 1025, 1100, 985], [1110, 985, 1320, 950], [1330, 945, 1530, 915]],
    rim: [[243, 1195, 315, 1110], [850, 1100, 815, 1035], [1165, 1040, 1100, 985], [1385, 1000, 1320, 950]],
    mint: [[365, 1010, 440, 1000, 360, 1100, 340, 1095], [1410, 960, 1520, 940, 1500, 985, 1440, 990]],
  },
  {
    top: [190, 985, 855, 895, 1195, 850, 1530, 815], bot: [193, 1027, 855, 940, 1195, 895, 1530, 860],
    deck: [370, 785, 1530, 660, 1530, 815, 1195, 850, 855, 895, 190, 985],
    beams: [[270, 905, 820, 848], [840, 835, 1120, 808], [1140, 805, 1420, 775], [1430, 770, 1530, 760]],
    rim: [[190, 985, 270, 905], [855, 895, 820, 848], [1195, 850, 1130, 805], [1430, 820, 1370, 775]],
    mint: [[350, 800, 450, 790, 350, 890, 305, 895], [1370, 870, 1500, 850, 1470, 890, 1400, 900]],
  },
]
const reversePairs = (a: number[]) => {
  const out: number[] = []
  for (let i = a.length - 2; i >= 0; i -= 2) out.push(a[i], a[i + 1])
  return out
}

const Floor = ({ d }: { d: FL }) => (
  <>
    <Pg p={d.deck} f="url(#glass)" s="none" />
    {d.mint.map((m, i) => <Pg key={i} p={m} f={MINT} s="none" o={.9} />)}
    {d.beams.map((b, i) => <Beam key={i} a={[b[0], b[1]]} b={[b[2], b[3]]} />)}
    {d.rim.map((r, i) => (
      <polygon key={i} points={pts([r[0], r[1], r[2], r[3], r[2] + 26, r[3] - 2, r[0] + 34, r[1] - 3])} fill={G} stroke={EDGE} strokeWidth="1.4" />
    ))}
    <polygon points={pts([...d.top, ...reversePairs(d.bot)])} fill={G} stroke={EDGE} strokeWidth="1.8" />
    {d.top.map((_v, i) => (i % 2 === 0 && i > 0 && i < d.top.length - 2 ? <line key={i} x1={d.top[i]} y1={d.top[i + 1]} x2={d.bot[i]} y2={d.bot[i + 1]} stroke={EDGE} strokeWidth="1.6" /> : null))}
    <polyline points={pts(d.top)} fill="none" stroke="#3f6a4a" strokeWidth="1.6" />
  </>
)

const OLIVE_PATCH = [[985, 1030, 1040, 1020, 1060, 1058, 1000, 1062], [1155, 1000, 1230, 985, 1250, 1018, 1180, 1028], [1165, 1200, 1240, 1190, 1260, 1225, 1185, 1235], [985, 1260, 1060, 1240, 1040, 1300, 1000, 1300], [760, 1090, 815, 1080, 830, 1130, 775, 1140], [750, 1255, 810, 1240, 830, 1310, 765, 1320]]

const Scene = () => {
  const floorH = Array.from({ length: 34 }, (_, i) => 408 + 1140 * Math.pow(i / 33, 2.4))
  const floorV = Array.from({ length: 60 }, (_, i) => -8000 + i * 300)
  return (
    <Svg viewBox="6 4 1525 1543" preserveAspectRatio="none">
      <defs>
        <linearGradient id="haze" x1="0" y1="0" x2="0" y2="1">
          <stop offset="0" stopColor="#d5d5e4" /><stop offset=".12" stopColor="#e8e8f0" /><stop offset=".5" stopColor="#ffffff" />
        </linearGradient>
        <pattern id="glass" width="14" height="60" patternUnits="userSpaceOnUse">
          <rect width="14" height="60" fill="#1aee6b" />
          <rect x="3" width="3" height="60" fill="#2cf27c" />
          <rect x="10" width="1.500" height="60" fill="#14dc62" />
        </pattern>
        <clipPath id="ground"><polygon points="6,416 1531,398 1531,1547 6,1547" /></clipPath>
      </defs>
      <polygon points="6,416 1531,398 1531,800 6,800" fill="url(#haze)" />
      <g clipPath="url(#ground)" stroke="#d9d9e6" strokeWidth="1.2">
        {floorH.map((y, i) => <line key={i} x1="6" x2="1531" y1={y + 8} y2={y - 10} />)}
        {floorV.map((x, i) => <line key={i} x1={800} y1={250} x2={x} y2={1547} />)}
      </g>
      <g stroke="#333" strokeWidth="1.1">
        <line x1="397" y1="415" x2="7" y2="885" />
        <line x1="7" y1="885" x2="260" y2="850" />
        <line x1="7" y1="915" x2="250" y2="885" />
        <line x1="7" y1="945" x2="240" y2="920" />
        <line x1="7" y1="1012" x2="190" y2="985" />
        <line x1="7" y1="1188" x2="245" y2="1160" />
        <line x1="190" y1="985" x2="125" y2="1058" />
        <line x1="220" y1="625" x2="125" y2="720" />
        <line x1="7" y1="745" x2="200" y2="700" />
      </g>
      <g fill="#fff" stroke="#f07a20" strokeWidth="1.5">
        {[[125, 1058, 19, 10], [47, 819, 13, 5], [80, 780, 12, 5], [158, 689, 8, 4], [190, 655, 8, 3], [202, 640, 8, 3], [214, 625, 7, 3]].map(([x, y, a, b]) => (
          <ellipse key={x} cx={x} cy={y} rx={a} ry={b} />
        ))}
      </g>
      {/* body */}
      <Pg p={[400, 745, 1530, 640, 1530, 1180, 1465, 1285, 1400, 1430, 1040, 1545, 320, 1545, 370, 1420, 345, 1290, 340, 1250, 350, 1110, 320, 1030, 340, 940, 270, 910]} f="url(#glass)" s="none" />
      {/* ground wall */}
      <Pg p={[835, 1430, 1115, 1370, 1465, 1285, 1425, 1410, 1040, 1530, 320, 1545]} f={G} />
      <Pg p={[1040, 1532, 1405, 1412, 1425, 1408, 1410, 1425, 1040, 1547]} f={PINK} s="none" />
      <Beam a={[375, 1435]} b={[800, 1340]} />
      <Beam a={[830, 1330]} b={[1060, 1280]} />
      <Beam a={[1080, 1275]} b={[1480, 1190]} />
      <polyline points="320,1547 370,1450 835,1345 1115,1285 1530,1200" fill="none" stroke={EDGE} strokeWidth="1.500" />
      <polyline points="345,1480 838,1380" fill="none" stroke={EDGE} strokeWidth="1.500" />
      {[[820, 1445, 820, 1547], [1045, 1405, 1030, 1530], [1060, 1400, 1045, 1525], [1225, 1365, 1200, 1480], [1240, 1360, 1215, 1475], [320, 1547, 835, 1430], [835, 1430, 1115, 1370], [1115, 1370, 1465, 1285]].map((l, i) => <line key={i} x1={l[0]} y1={l[1]} x2={l[2]} y2={l[3]} stroke={EDGE} strokeWidth="2" />)}
      {/* columns */}
      {[[790, 1310, 825, 1305, 825, 1345, 805, 1345], [1230, 1215, 1270, 1215, 1255, 1240, 1240, 1240], [1030, 1250, 1045, 1248, 1080, 1285, 1065, 1290], [800, 1465, 822, 1460, 820, 1470, 805, 1472]].map((p, i) => <Pg key={i} p={p} f={PINK} w={1} />)}
      <Floor d={floorData[0]} />
      {[[770, 1150, 830, 1140, 828, 1195, 790, 1195], [1215, 1060, 1305, 1045, 1285, 1100, 1250, 1100], [1030, 1095, 1045, 1093, 1085, 1130, 1062, 1135]].map((p, i) => <Pg key={i} p={p} f={PINK} w={1} />)}
      {[[310, 1235, 360, 1225, 345, 1290, 335, 1300], [345, 1405, 380, 1395, 365, 1445, 355, 1450]].map((p, i) => <Pg key={i} p={p} />)}
      <Floor d={floorData[1]} />
      {[[750, 950, 785, 940, 832, 935, 832, 1030, 795, 1035], [1000, 925, 1030, 915, 1090, 985, 1060, 990], [1205, 885, 1340, 868, 1320, 950, 1270, 948]].map((p, i) => <Pg key={i} p={p} f={PINK} w={1} />)}
      {[[265, 1020, 340, 1010, 330, 1100, 310, 1120], [1060, 910, 1120, 900, 1100, 985, 1060, 960]].map((p, i) => <Pg key={i} p={p} />)}
      <Floor d={floorData[2]} />
      {OLIVE_PATCH.map((p, i) => <Pg key={i} p={p} f={OL} s="none" o={.75} />)}
      {/* upper storey posts */}
      {[[345, 745, 395, 745, 365, 788, 352, 785], [730, 750, 790, 790, 830, 845, 790, 845, 735, 765], [787, 705, 838, 700, 838, 845, 787, 845], [1285, 740, 1310, 660, 1385, 655, 1350, 780]].map((p, i) => <Pg key={i} p={p} f={PINK} w={1.2} />)}
      {[[215, 760, 295, 750, 310, 850, 265, 912, 245, 860], [1080, 685, 1160, 678, 1135, 805, 1075, 775], [975, 690, 1020, 690, 1010, 722, 985, 716], [1160, 675, 1215, 670, 1205, 705, 1170, 700]].map((p, i) => <Pg key={i} p={p} />)}
      {/* roof */}
      <Pg p={[495, 487, 1140, 465, 1530, 535, 1530, 610, 1225, 625, 860, 655, 127, 712]} />
      {[[490, 497, 640, 492, 680, 525, 430, 530], [690, 488, 830, 482, 900, 510, 722, 515], [720, 518, 900, 512, 1000, 545, 785, 552], [880, 482, 970, 478, 1040, 500, 950, 505]].map((p, i) => <Pg key={i} p={p} f="#0fe062" s={EDGE} w={1} />)}
      {[[430, 532, 680, 528, 725, 558, 370, 572], [345, 590, 730, 570, 790, 625, 340, 655], [790, 565, 1000, 550, 1120, 600, 830, 620], [1060, 545, 1200, 540, 1350, 590, 1180, 600], [1240, 530, 1530, 535, 1530, 575, 1400, 585]].map((p, i) => <Pg key={i} p={p} f="url(#glass)" s={EDGE} w={1} />)}
      <Pg p={[480, 540, 640, 535, 650, 560, 460, 568]} f={MINT} s="none" />
      <Pg p={[380, 605, 470, 598, 465, 640, 375, 648]} f={MINT} s="none" o={.8} />
      {[[330, 590, 365, 570, 730, 558, 745, 570, 380, 585], [640, 490, 672, 488, 830, 625, 790, 628], [830, 482, 872, 480, 1010, 545, 970, 548], [970, 480, 1015, 478, 1205, 540, 1160, 545], [1000, 548, 1040, 548, 1150, 600, 1110, 602], [1200, 540, 1240, 535, 1400, 585, 1360, 590], [1240, 525, 1530, 518, 1530, 530, 1260, 537]].map((p, i) => <Pg key={i} p={p} f={PINK} s="#222" w={1} />)}
      <Beam a={[225, 665]} b={[825, 625]} lip={9} h={30} />
      <Beam a={[850, 628]} b={[1148, 605]} lip={8} h={22} />
      <Beam a={[1170, 602]} b={[1388, 588]} lip={7} h={20} />
      <Beam a={[1400, 585]} b={[1530, 578]} lip={5} h={16} />
      <Pg p={[127, 712, 860, 655, 1225, 625, 1530, 605, 1530, 640, 1225, 665, 860, 700, 135, 765]} />
      <polygon points="127,712 330,590 370,595 225,670" fill={G} stroke={EDGE} strokeWidth="1.4" />
      <polygon points="330,590 495,487 520,487 365,590" fill={G} stroke={EDGE} strokeWidth="1.4" />
      {[[860, 655, 860, 700], [1225, 625, 1225, 665], [1480, 608, 1478, 645], [860, 655, 825, 625], [1225, 625, 1150, 605]].map((l, i) => <line key={i} x1={l[0]} y1={l[1]} x2={l[2]} y2={l[3]} stroke={EDGE} strokeWidth="2" />)}
      <polyline points="495,487 1140,465 1530,535" fill="none" stroke="#113" strokeWidth="2" />
      <ellipse cx="1230" cy="510" rx="105" ry="22" fill="#10d95c" stroke={EDGE} />
      <line x1="1445" y1="580" x2="1460" y2="545" stroke="#222" strokeWidth="1.5" />
      <g fill="#fff" stroke="#f07a20" strokeWidth="1.5">
        <ellipse cx="905" cy="943" rx="15" ry="8" fill="none" />
        <ellipse cx="1262" cy="890" rx="15" ry="7" fill="none" />
        <ellipse cx="1510" cy="853" rx="15" ry="6" />
      </g>
      {/* white overlay grid */}
      <g stroke="#fff" strokeWidth="2" opacity=".85">
        {[[370, 785, 240, 1215], [482, 775, 515, 1545], [605, 765, 865, 1545], [735, 755, 1210, 1545], [838, 745, 1530, 1230], [950, 735, 1530, 1130], [1060, 725, 1530, 1010], [1140, 715, 1530, 930], [1530, 1270, 1060, 1400], [1530, 1040, 240, 1215], [1530, 1060, 340, 1300], [1530, 840, 320, 850], [370, 790, 760, 755], [1530, 1280, 840, 1430]].map((l, i) => <line key={i} x1={l[0]} y1={l[1]} x2={l[2]} y2={l[3]} />)}
      </g>
      <g stroke="#7d7d90" strokeWidth="1.500" opacity=".9">
        <line x1="270" y1="930" x2="1530" y2="790" />
        <line x1="190" y1="985" x2="1530" y2="830" />
        <line x1="310" y1="1145" x2="1530" y2="990" />
      </g>
    </Svg>
  )
}

const Cross = () => <svg width="14" height="14" viewBox="0 0 14 14">{L('M2 2l10 10M12 2 2 12', '#6b7480', 2)}</svg>
const Pin = () => <svg width="14" height="14" viewBox="0 0 14 14">{L('M5 2h5v6H5zM3 8h9M7.500 8v5', '#6b7480', 1.6)}</svg>
const UpBtn = () => <svg width="15" height="13" viewBox="0 0 15 13">{L('M1 12 7.500 1 14 12', '#222', 1.2)}</svg>
const DownBtn = () => <svg width="15" height="13" viewBox="0 0 15 13">{L('M1 1h13L7.500 12z', '#222', 1.2)}</svg>

const MiniBtn = styled.svg<{ $ml: number }>`
  margin-left: ${(p) => p.$ml}px; align-self: center;
`
const WinSmall = () => (
  <>
    <MiniBtn $ml={12} width="14" height="14" viewBox="0 0 14 14">{L('M1 12h12', '#8f98a3', 3)}</MiniBtn>
    <MiniBtn $ml={9} width="16" height="16" viewBox="0 0 16 16">{F('M2 3h12v11H2z', '#e2e5ea', '#8f98a3', 2)}{L('M2 5h12', '#8f98a3', 3)}</MiniBtn>
    <MiniBtn $ml={9} width="14" height="14" viewBox="0 0 14 14">{L('M1 1l12 12M13 1 1 13', '#8f98a3', 2.6)}</MiniBtn>
  </>
)

export default function App() {
  return (
    <Page>
      <GlobalStyle />
      <Logo><span>ide</span><b>CAD</b></Logo>
      <TitleBar>
        <Qat>
          {['home', 'new', 'open', 'save', 'saveall', 'undo', 'redo', 'undoBox'].map((n) => <Cell key={n}><Ic n={n} /></Cell>)}
          <Gap $w={4} $line />
          <Cell $on><Ic n="layerBars" /></Cell>
          {['textBox', 'baseT', 'arrowsH', 'ell'].map((n) => <Cell key={n}><Ic n={n} /></Cell>)}
          <Gap $w={5} $line />
          <Cell><Ic n="lockGrid" /></Cell><Cell><Ic n="lockZig" /></Cell>
          <Cell $on><Ic n="lockSnap" /></Cell>
          <Cell><Ic n="snapA" /></Cell><Cell><Ic n="snapB" /></Cell>
          <Gap $w={2} $line />
          <Cell $on><Ic n="redArrows" /></Cell>
          <Cell><Ic n="aslash" /></Cell><Cell><Ic n="bolt" /></Cell>
          <QatChev><Chevron /></QatChev>
        </Qat>
        <SmallMenu><Chevron $c="#555" /></SmallMenu>
        <Title>ideCAD Statik - BİTİRME-2 SON HALİ.ide11trial - STATİK ŞABLON PROJE - [4. KAT TAVANI, 18.30 KOTU]</Title>
        <WinBtns>
          <WinBtn><svg width="12" height="12" viewBox="0 0 12 12">{L('M0 6h12', '#222', 1.2)}</svg></WinBtn>
          <WinBtn><svg width="12" height="12" viewBox="0 0 12 12">{L('M3 3V1h8v8H9M1 3h8v8H1z', '#222', 1.1)}</svg></WinBtn>
          <WinBtn><svg width="12" height="12" viewBox="0 0 12 12">{L('M0 0l12 12M12 0 0 12', '#222', 1.1)}</svg></WinBtn>
        </WinBtns>
      </TitleBar>
      <TabRow>
        <Tab $w={93} $on>Betonarme</Tab>
        <Tab $w={59}>Çelik</Tab><Tab $w={75}>Birleşim</Tab><Tab $w={75}>Objeler</Tab>
        <Tab $w={77}>Değiştir</Tab><Tab $w={72}>Araçlar</Tab><Tab $w={73}>Ayarlar</Tab><Tab $w={82}>Görüntü</Tab>
        <Tab $w={136}>Analiz ve Tasarım</Tab><Tab $w={222}>Analiz ve Tasarım Görüntüleme</Tab>
        <Tab $w={82}>Raporlar</Tab><Tab $w={84}>Çizimler</Tab>
        <Search>
          <SearchInner>
            <svg width="13" height="13" viewBox="0 0 13 13"><circle cx="5" cy="5" r="3.600" fill="none" stroke="#8a949e" />{L('M8 8l4 4', '#8a949e', 1.2)}</svg>
            Herhangi bir komut ara...
          </SearchInner>
          <Right><Chevron /></Right>
        </Search>
        <ComboWrap>
          <Ic n="layerStack" s={24} /><Ic n="layerStack2" s={22} />
        </ComboWrap>
        <Combo>
          <svg width="12" height="12" viewBox="0 0 12 12" style={{ marginBottom: 6 }}>{F('M1 1h10v10H1z', '#fff', '#111', 1.5)}{L('M2 2l8 8M10 2l-8 8', '#111', 1.4)}</svg>
          <svg width="12" height="14" viewBox="0 0 12 14" style={{ marginBottom: 6, marginLeft: -2 }}>{F('M1 6h7v7H1z', '#fff', '#223', 1)}{L('M6 6V3c0-3 5-3 5 0', '#223', 1)}</svg>
          Kolon
          <Right><Chevron /></Right>
        </Combo>
        <DimText>Görünüm</DimText>
        <ChevMid><Chevron /></ChevMid>
        <Cell $w={36}><Ic n="sel3" s={20} /></Cell>
        <Gap $w={2} $line />
        <Cell $w={30}><svg width="18" height="21" viewBox="0 0 18 21">{F('M0 0h17v21H0z', '#2f4fa0', '#111')}<text x="5" y="16" fontSize="14" fill="#bcd">?</text></svg></Cell>
        <ChevMid><Chevron /></ChevMid>
        <WinSmall />
      </TabRow>
      <Ribbon />
      <ToolRow>
        <Toolbar $w={1531}>
          <HGrip />
          <TB groups={T1} />
          <ChevBtn><Chevron $c="#6b747e" /></ChevBtn>
        </Toolbar>
        <Toolbar $w={361} $ml={2} $pl={9}>
          <HGrip />
          <TB groups={T2} />
        </Toolbar>
        <EndChev><Chevron $c="#7f8893" /></EndChev>
      </ToolRow>
      <Main>
        <LeftBar>
          <VBar $h={672}>
            <VGrip />
            <VList items={LEFT} />
            <VFoot />
          </VBar>
        </LeftBar>
        <CenterCol>
          <Upper>
            <TreePanel>
              <TreeHead>
                Yapı Ağacı
                <HeadBtn $auto><Pin /></HeadBtn>
                <HeadBtn><Cross /></HeadBtn>
              </TreeHead>
              <TreeRowBox>
                <TreeBody>
                  {GUIDES.map(([x, t, h], i) => <Guide key={i} $x={x} $top={t} $h={h} />)}
                  {TREE.map(([x, ic, t, e, tick], i) => (
                    <Row key={i} $x={x} $tick={tick}>
                      <ExpSlot>{e === '-' ? <Exp /> : e === '+' ? <ExpPlus /> : null}</ExpSlot>
                      <IconSlot><TreeIc n={ic} /></IconSlot>
                      {t}
                    </Row>
                  ))}
                </TreeBody>
                <TreeTrack><VThumb /></TreeTrack>
              </TreeRowBox>
              <HThumb />
            </TreePanel>
            <Views>
              <ViewRow>
                <ViewBox $w={761}>
                  <Cad />
                  <CornerBtns><CornerBtn><UpBtn /></CornerBtn></CornerBtns>
                </ViewBox>
                <ViewBox $w={749}>
                  <Scene />
                  <ViewCaption>Tüm yetersizlikler - Deneme Sürümü</ViewCaption>
                  <Legend>
                    <LegendBand $c="#ff0000">YETERSİZ</LegendBand>
                    <LegendBand $c="#00f552">YETERLİ</LegendBand>
                  </Legend>
                  <CornerBtns>
                    <CornerBtn><DownBtn /></CornerBtn>
                    <CornerBtn><svg width="15" height="13" viewBox="0 0 15 13">{L('M2 12V1l11 11V1', '#222', 1.2)}</svg></CornerBtn>
                    <CornerBtn><UpBtn /></CornerBtn>
                  </CornerBtns>
                </ViewBox>
              </ViewRow>
              <Command>
                Komut : column/kolon/cc/kl<br />
                Kolonun yerleşim noktasını belirleyin veya [Kenara yanaşık/Ortalanmış/köşeye yanaşık/Ayarlar] :<br />
                Kolon açısını belirle.
              </Command>
            </Views>
          </Upper>
          <Status>
            <StatusCell $w={258}>Dikdörtgen Kolon - 25/100/0</StatusCell>
            <StatusCell $pl={4}>Burada zaten bir kolon var !</StatusCell>
            <StatusCell $w={76}>kN / m</StatusCell>
            <StatusCell $w={75} $pl={10}>1 : 100</StatusCell>
            <StatusCell $w={76} $pl={9}>% 435</StatusCell>
          </Status>
        </CenterCol>
        <Dock>
          <RaporTab>Rapor Önizleme</RaporTab>
          <DockCol $w={31}>
            <VBar $h={554} $w={31}><VGrip /><VList items={COL_A} /><VFoot $dbl><span /><span>▮▸</span></VFoot></VBar>
          </DockCol>
          <DockCol $w={31} $ml={1}>
            <VBar $h={575} $w={31}><VGrip /><VList items={COL_B} /><VFoot $dbl><span /><span>▮▸</span></VFoot></VBar>
            <VBar $h={242} $w={31}><VGrip /><VList items={COL_B2} /><VFoot $dbl><span>⇵</span><span>▮▸</span></VFoot></VBar>
          </DockCol>
          <DockCol $w={31} $ml={1}>
            <VBar $h={778} $w={31}><VGrip /><VList items={COL_C} /><VFoot $dbl><span>⇵</span><span>▮▸</span></VFoot></VBar>
            <VBar $h={39} $w={31}><VGrip /><VFoot $dbl><span>⇵</span><span>▮▸</span></VFoot></VBar>
          </DockCol>
        </Dock>
      </Main>
    </Page>
  )
}
